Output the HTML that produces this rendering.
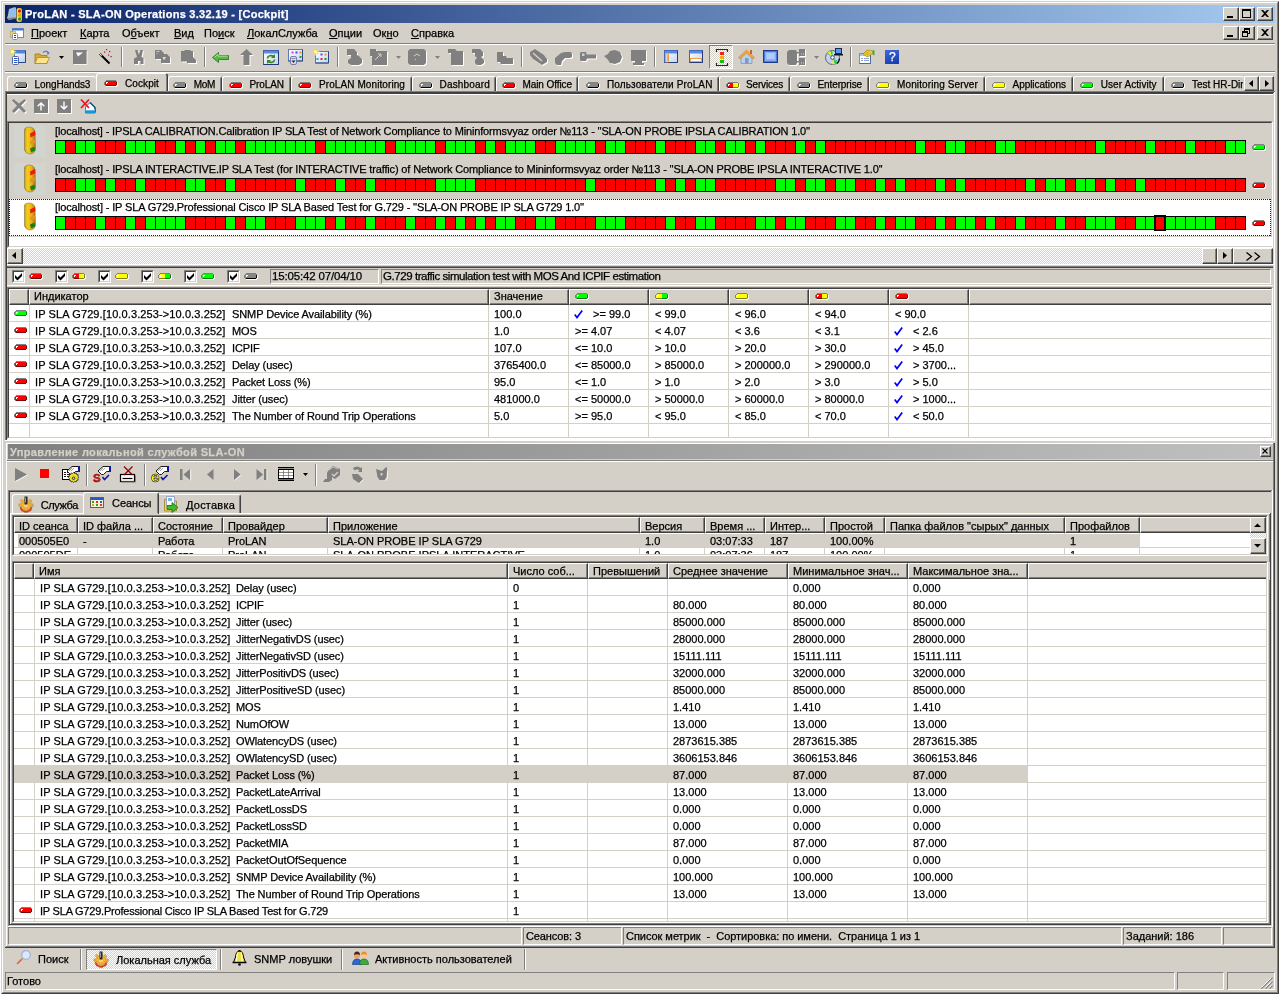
<!DOCTYPE html><html><head><meta charset="utf-8"><title>ProLAN</title><style>
html,body{margin:0;padding:0}
body{width:1280px;height:995px;background:#d4d0c8;position:relative;overflow:hidden;font-family:"Liberation Sans",sans-serif;font-size:11px;color:#000}
div{position:absolute;box-sizing:border-box}
.t,.m,.tb,.ms{-webkit-text-stroke:0.25px currentColor}
svg{position:absolute;overflow:visible}
.t{white-space:pre;line-height:13px;height:13px;font-size:11px;letter-spacing:0}
.tb{white-space:pre;line-height:13px;height:13px;font-size:10px}
.ms{white-space:pre;line-height:13px;height:13px;font-size:11px;letter-spacing:-0.2px}
.m{white-space:pre;line-height:13px;height:13px;font-size:11px}
.b{font-weight:bold}
.raised{border:1px solid;border-color:#fff #404040 #404040 #fff;box-shadow:inset -1px -1px 0 #808080;background:#d4d0c8}
.sunk{border:1px solid;border-color:#808080 #fff #fff #808080}
.hdr{border:1px solid;border-color:#fff #808080 #808080 #fff;background:#d4d0c8;box-shadow:1px 1px 0 #404040}
</style></head><body><div id="root" style="left:0;top:0;width:1280px;height:995px;will-change:transform">
<div style="left:0px;top:0px;width:1280px;height:995px;background:#fff"></div>
<div style="left:1px;top:1px;width:1278px;height:993px;background:#d4d0c8;border:1px solid;border-color:#d4d0c8 #404040 #404040 #d4d0c8"></div>
<div style="left:2px;top:2px;width:1276px;height:991px;border:1px solid;border-color:#fff #808080 #808080 #fff"></div>
<div style="left:5px;top:5px;width:1270px;height:18px;background:linear-gradient(90deg,#0a246a 0%,#a6caf0 100%)"></div>
<svg style="left:7px;top:6px" width="16" height="16" viewBox="0 0 16 16">
<path d="M2 3 L8 1 L9 2 L9 12 L2 14 L0 12 L1 9 Z" fill="#b8bcc0"/>
<path d="M3 3.5 L8 2 L8 10 L3 11 Z" fill="#8cc0f0"/>
<path d="M0.5 12 L2 14 L9 12.5 L8 11 L2 12 Z" fill="#808488"/>
<rect x="9.5" y="2" width="5.5" height="14" rx="2" fill="#e8c020"/>
<rect x="10" y="3" width="2" height="12" fill="#f4dc50"/>
<circle cx="12.5" cy="5" r="1.6" fill="#f01010"/>
<circle cx="12.3" cy="9" r="1.5" fill="#e8a010"/>
<circle cx="12.5" cy="13" r="1.5" fill="#209020"/>
</svg>
<div class="m" style="left:25px;top:8px;color:#fff;font-weight:bold;letter-spacing:0.27px">ProLAN - SLA-ON Operations 3.32.19 - [Cockpit]</div>
<div class="raised" style="left:1223px;top:7px;width:16px;height:14px;"></div>
<div style="left:1227px;top:16px;width:6px;height:2px;background:#000"></div>
<div class="raised" style="left:1239px;top:7px;width:16px;height:14px;"></div>
<div style="left:1242px;top:9px;width:9px;height:9px;border:1px solid #000;border-top:2px solid #000"></div>
<div class="raised" style="left:1257px;top:7px;width:16px;height:14px;"></div>
<svg style="left:1261px;top:10px" width="8" height="7" viewBox="0 0 8 7"><path d="M0 0h2l2 2l2-2h2l-3 3.5l3 3.5h-2l-2-2l-2 2h-2l3-3.5z" fill="#000"/></svg>
<div class="raised" style="left:1223px;top:26px;width:16px;height:14px;"></div>
<div style="left:1227px;top:35px;width:6px;height:2px;background:#000"></div>
<div class="raised" style="left:1239px;top:26px;width:16px;height:14px;"></div>
<div style="left:1244px;top:28px;width:6px;height:6px;border:1px solid #000;border-top:2px solid #000"></div>
<div style="left:1242px;top:31px;width:6px;height:6px;border:1px solid #000;border-top:2px solid #000;background:#d4d0c8"></div>
<div class="raised" style="left:1257px;top:26px;width:16px;height:14px;"></div>
<svg style="left:1261px;top:29px" width="8" height="7" viewBox="0 0 8 7"><path d="M0 0h2l2 2l2-2h2l-3 3.5l3 3.5h-2l-2-2l-2 2h-2l3-3.5z" fill="#000"/></svg>
<svg style="left:10px;top:28px" width="14" height="12" viewBox="0 0 14 12">
<rect x="2.5" y="0.5" width="11" height="9" fill="#fff" stroke="#7088b0"/>
<rect x="2.5" y="0.5" width="11" height="2" fill="#3a78d8"/>
<rect x="0.5" y="3.5" width="5" height="6" fill="#f0d070" stroke="#c0a040" stroke-width="0.6"/>
<rect x="2.5" y="5.5" width="5" height="6" rx="1" fill="#fff" stroke="#8090b0"/>
<rect x="4" y="7" width="2" height="1" fill="#1040e0"/><rect x="4" y="9" width="2" height="1" fill="#1040e0"/>
</svg>
<div class="t" style="left:31px;top:27px;letter-spacing:0"><u>П</u>роект</div>
<div class="t" style="left:80px;top:27px;letter-spacing:0"><u>К</u>арта</div>
<div class="t" style="left:122px;top:27px;letter-spacing:0">О<u>б</u>ъект</div>
<div class="t" style="left:174px;top:27px;letter-spacing:0"><u>В</u>ид</div>
<div class="t" style="left:204px;top:27px;letter-spacing:0">По<u>и</u>ск</div>
<div class="t" style="left:247px;top:27px;letter-spacing:0"><u>Л</u>окалСлужба</div>
<div class="t" style="left:329px;top:27px;letter-spacing:0"><u>О</u>пции</div>
<div class="t" style="left:373px;top:27px;letter-spacing:0">Ок<u>н</u>о</div>
<div class="t" style="left:411px;top:27px;letter-spacing:0"><u>С</u>правка</div>
<div style="left:5px;top:43px;width:1270px;height:1px;background:#808080"></div>
<div style="left:5px;top:44px;width:1270px;height:1px;background:#ffffff"></div>
<svg style="left:9px;top:48px" width="17" height="17" viewBox="0 0 17 17"><rect x="5.500" y="2.500" width="11" height="12" fill="url(#wb0)" stroke="#5878c0"/><defs><linearGradient id="wb0" x1="0" y1="0" x2="1" y2="1"><stop offset="0" stop-color="#ffffff"/><stop offset="1" stop-color="#b8ccf4"/></linearGradient></defs>
<rect x="6" y="3" width="10" height="2.500" fill="#4c84e4"/><path d="M5.500 14.500h11v-12" stroke="#304880" fill="none"/>
<rect x="3.500" y="8.500" width="6" height="8" rx="1" fill="#fff" stroke="#5068a0"/>
<rect x="5" y="10" width="3.500" height="1" fill="#2858d0"/><rect x="5" y="12" width="3.500" height="1" fill="#2858d0"/><rect x="5" y="14" width="3.500" height="1" fill="#2858d0"/>
<path d="M3.500 0v7.500M0 3.700h7.200M1 1.200l5 5M6 1.200l-5 5" stroke="#f8d838" stroke-width="1.200"/><circle cx="3.500" cy="3.700" r="1.500" fill="#fffcc0"/></svg>
<svg style="left:34px;top:49px" width="17" height="16" viewBox="0 0 17 16"><path d="M1 5h5l1 1.500h6v8h-12z" fill="#d8a838" stroke="#a07818" stroke-width="0.800"/>
<path d="M3.500 8.500h12l-3 6h-11.500z" fill="#fce48c" stroke="#b08820" stroke-width="0.800"/>
<path d="M9 3.500q3.500-3 5.500 0.500" fill="none" stroke="#5080c8" stroke-width="1.400"/><path d="M13 2.500l3 1.500l-2.500 2z" fill="#5080c8"/></svg>
<svg style="left:59px;top:56px" width="5" height="3" viewBox="0 0 5 3"><path d="M0 0h5l-2.500 3z" fill="#000"/></svg>
<svg style="left:73px;top:49px" width="15" height="15" viewBox="0 0 15 15"><rect x="0" y="1" width="14" height="14" fill="#808080"/><path d="M3 3.500h7l-5 4z" fill="#fff"/><path d="M14 2v13.500h-13" stroke="#fff" fill="none" stroke-width="0.800"/></svg>
<svg style="left:98px;top:48px" width="14" height="16" viewBox="0 0 14 16"><path d="M1.500 5.500l10 10" stroke="#000" stroke-width="2"/><path d="M1.200 5.200l2.500 2.500" stroke="#f0e8a0" stroke-width="1.200"/>
<rect x="8" y="1" width="1.200" height="1.200" fill="#c01030"/><rect x="11" y="3" width="1.200" height="1.200" fill="#901040"/><rect x="6" y="3.500" width="1.200" height="1.200" fill="#c01030"/><rect x="10" y="6.500" width="1.200" height="1.200" fill="#c01030"/><rect x="12.500" y="8" width="1.200" height="1.200" fill="#901040"/></svg>
<div style="left:121px;top:47px;width:1px;height:20px;background:#808080"></div>
<div style="left:122px;top:47px;width:1px;height:20px;background:#ffffff"></div>
<svg style="left:133px;top:49px" width="13" height="17" viewBox="0 0 13 17"><path d="M2 1h2.500l1.500 4.500l1.500-4.500h2.500l-1.500 7l2 1v6h-3v-3h-2.500v3h-4v-5.500l3-1.500z" fill="#fff" transform="translate(1,1)"/><path d="M2 1h2.500l1.500 4.500l1.500-4.500h2.500l-1.500 7l2 1v6h-3v-3h-2.500v3h-4v-5.500l3-1.500z" fill="#808080"/></svg>
<svg style="left:155px;top:50px" width="16" height="14" viewBox="0 0 16 14"><path d="M0 0h6l3 3v1h3l3 3v6h-9v-4h-6z" fill="#fff" transform="translate(1,1)"/><path d="M0 0h6l3 3v1h3l3 3v6h-9v-4h-6z" fill="#808080"/><path d="M1.500 1.500h3M1.500 3.500h1M8 7.500h2.500l-1.500 2z" stroke="#e8e8e8" fill="#e8e8e8" stroke-width="0.700"/></svg>
<svg style="left:180px;top:50px" width="17" height="14" viewBox="0 0 17 14"><path d="M1 1h3l1-1h5l1 1h2v6l3 3v3h-9v-1.500h-6z" fill="#fff" transform="translate(1,1)"/><path d="M1 1h3l1-1h5l1 1h2v6l3 3v3h-9v-1.500h-6z" fill="#808080"/></svg>
<div style="left:204px;top:47px;width:1px;height:20px;background:#808080"></div>
<div style="left:205px;top:47px;width:1px;height:20px;background:#ffffff"></div>
<svg style="left:212px;top:52px" width="17" height="11" viewBox="0 0 17 11"><path d="M0.500 5.500l6-5v3h10v4h-10v3z" fill="#58b848" stroke="#2c7c24" stroke-width="0.900"/><path d="M2.500 5.300l3.500-3v1.800h9.500" stroke="#b8e8a0" fill="none" stroke-width="0.900"/></svg>
<svg style="left:240px;top:49px" width="15" height="17" viewBox="0 0 15 17"><path d="M6.500 0l6.500 6h-3.500v10h-6v-10h-3.500z" fill="#fff" transform="translate(1,1)"/><path d="M6.500 0l6.500 6h-3.500v10h-6v-10h-3.500z" fill="#808080"/></svg>
<svg style="left:263px;top:50px" width="16" height="15" viewBox="0 0 16 15"><defs><linearGradient id="wb" x1="0" y1="0" x2="1" y2="1"><stop offset="0" stop-color="#ffffff"/><stop offset="1" stop-color="#c4d4f4"/></linearGradient></defs>
<rect x="0.500" y="0.500" width="15" height="14" fill="url(#wb)" stroke="#4060b0"/><rect x="1" y="1" width="14" height="2.500" fill="#5a8ae8"/><path d="M0.500 14.500h15v-13" stroke="#203878" fill="none"/>
<path d="M4.500 8.500a3.500 3 0 0 1 6-2" fill="none" stroke="#3a8a1a" stroke-width="1.700"/><path d="M12 4v4h-4z" fill="#3a8a1a"/>
<path d="M11.500 9.500a3.500 3 0 0 1-6 2" fill="none" stroke="#3a8a1a" stroke-width="1.700"/><path d="M4 14v-4h4z" fill="#3a8a1a"/></svg>
<svg style="left:288px;top:49px" width="16" height="16" viewBox="0 0 16 16"><rect x="0.500" y="0.500" width="14" height="11.500" fill="url(#wb)" stroke="#6078b0"/><path d="M0.500 12h14v-11.500" stroke="#304880" fill="none"/>
<rect x="3.500" y="2.500" width="2" height="2" fill="#d040d0"/><rect x="7.500" y="2.500" width="2" height="2" fill="#5040e0"/><rect x="11.500" y="2.500" width="2" height="2" fill="#f09020"/><rect x="11.500" y="7" width="2" height="2" fill="#20a020"/>
<rect x="2.500" y="7.500" width="6" height="8" rx="1.500" fill="#d8dce8" stroke="#7080a8"/><path d="M3.500 9.500h4" stroke="#8890a8"/><path d="M3.500 11.500h4l-2 2.500z" fill="#202838"/></svg>
<svg style="left:312px;top:48px" width="17" height="16" viewBox="0 0 17 16"><rect x="3.500" y="3.500" width="13" height="11.500" fill="url(#wb)" stroke="#6078b0"/><path d="M3.500 15h13v-11.500" stroke="#304880" fill="none"/>
<rect x="8.500" y="5.500" width="2" height="2" fill="#6040e0"/><rect x="12.500" y="5.500" width="2" height="2" fill="#f09020"/>
<rect x="4.500" y="10" width="2" height="2" fill="#20a0e0"/><rect x="8.500" y="10" width="2" height="2" fill="#f02020"/><rect x="12.500" y="10" width="2" height="2" fill="#20a020"/>
<path d="M3.500 0v7.500M0 3.700h7.200M1 1.200l5 5M6 1.200l-5 5" stroke="#f8d838" stroke-width="1.200"/><circle cx="3.500" cy="3.700" r="1.500" fill="#fffcc0"/></svg>
<div style="left:337px;top:47px;width:1px;height:20px;background:#808080"></div>
<div style="left:338px;top:47px;width:1px;height:20px;background:#ffffff"></div>
<svg style="left:346px;top:49px" width="18" height="17" viewBox="0 0 18 17"><path d="M1 0h7l3 3v3l2 1l3 3v4l-3 2h-8l-3-2v-3l3-2v-3h-4z" fill="#fff" transform="translate(1,1)"/><path d="M1 0h7l3 3v3l2 1l3 3v4l-3 2h-8l-3-2v-3l3-2v-3h-4z" fill="#808080"/></svg>
<svg style="left:370px;top:49px" width="18" height="17" viewBox="0 0 18 17"><path d="M0 0h6v2h11v14h-15v-9h-2z" fill="#fff" transform="translate(1,1)"/><path d="M0 0h6v2h11v14h-15v-9h-2z" fill="#808080"/></svg>
<svg style="left:374px;top:52px" width="10" height="10" viewBox="0 0 10 10"><path d="M1 8l6-6M7 2v3M4 2h3" stroke="#d4d0c8" fill="none"/></svg>
<svg style="left:396px;top:56px" width="5" height="3" viewBox="0 0 5 3"><path d="M0 0h5l-2.500 3z" fill="#808080"/></svg>
<svg style="left:408px;top:49px" width="19" height="17" viewBox="0 0 19 17"><path d="M2 0h14l2 2v12l-2 2h-14l-2-2v-12z" fill="#fff" transform="translate(1,1)"/><path d="M2 0h14l2 2v12l-2 2h-14l-2-2v-12z" fill="#808080"/></svg>
<svg style="left:413px;top:53px" width="8" height="8" viewBox="0 0 8 8"><path d="M1 3l3-2l3 2" stroke="#d4d0c8" fill="none"/><rect x="2" y="6" width="1" height="1" fill="#d4d0c8"/></svg>
<svg style="left:435px;top:56px" width="5" height="3" viewBox="0 0 5 3"><path d="M0 0h5l-2.500 3z" fill="#808080"/></svg>
<svg style="left:448px;top:49px" width="16" height="17" viewBox="0 0 16 17"><path d="M0 0h7l2 2h6v14h-12v-12h-3z" fill="#fff" transform="translate(1,1)"/><path d="M0 0h7l2 2h6v14h-12v-12h-3z" fill="#808080"/></svg>
<svg style="left:472px;top:49px" width="14" height="17" viewBox="0 0 14 17"><path d="M0 0h8l3 3v4l-2 1l3 3v3l-3 2h-4l-2-2v-3l2-2l-2-2v-3h-3z" fill="#fff" transform="translate(1,1)"/><path d="M0 0h8l3 3v4l-2 1l3 3v3l-3 2h-4l-2-2v-3l2-2l-2-2v-3h-3z" fill="#808080"/></svg>
<svg style="left:496px;top:50px" width="18" height="15" viewBox="0 0 18 15"><path d="M1 2h6v4h3l1 2h6v6h-12l-1-2h-3z" fill="#fff" transform="translate(1,1)"/><path d="M1 2h6v4h3l1 2h6v6h-12l-1-2h-3z" fill="#808080"/></svg>
<div style="left:521px;top:47px;width:1px;height:20px;background:#808080"></div>
<div style="left:522px;top:47px;width:1px;height:20px;background:#ffffff"></div>
<svg style="left:528px;top:49px" width="21" height="17" viewBox="0 0 21 17"><path d="M2 3l5-3l9 6l3 4v3l-5 3l-9-6l-3-4z" fill="#fff" transform="translate(1,1)"/><path d="M2 3l5-3l9 6l3 4v3l-5 3l-9-6l-3-4z" fill="#808080"/></svg>
<svg style="left:531px;top:51px" width="14" height="12" viewBox="0 0 14 12"><path d="M2 2l9 8" stroke="#d4d0c8" stroke-width="1.500"/></svg>
<svg style="left:554px;top:50px" width="20" height="16" viewBox="0 0 20 16"><path d="M1 8l6-5l4-1h6l1 2v3l-2 1h-5l-3 3l-1 4h-4l-2-2z" fill="#fff" transform="translate(1,1)"/><path d="M1 8l6-5l4-1h6l1 2v3l-2 1h-5l-3 3l-1 4h-4l-2-2z" fill="#808080"/></svg>
<svg style="left:580px;top:52px" width="18" height="10" viewBox="0 0 18 10"><path d="M1 0h5l1 2.500h9v4h-9l-1 2.500h-5l-1-1v-7z" fill="#fff" transform="translate(1,1)"/><path d="M1 0h5l1 2.500h9v4h-9l-1 2.500h-5l-1-1v-7z" fill="#808080"/><rect x="2" y="1.500" width="2.500" height="2.500" fill="#d4d0c8"/></svg>
<svg style="left:604px;top:50px" width="19" height="16" viewBox="0 0 19 16"><path d="M0 6l4-2l2-3l5-1l5 2l2 5l-2 5l-5 2l-5-1l-2-3z" fill="#fff" transform="translate(1,1)"/><path d="M0 6l4-2l2-3l5-1l5 2l2 5l-2 5l-5 2l-5-1l-2-3z" fill="#808080"/></svg>
<svg style="left:629px;top:50px" width="19" height="16" viewBox="0 0 19 16"><path d="M2 0h15v11h-4v2h2v2h-11v-2h2v-2h-4v-11z" fill="#fff" transform="translate(1,1)"/><path d="M2 0h15v11h-4v2h2v2h-11v-2h2v-2h-4v-11z" fill="#808080"/></svg>
<div style="left:654px;top:47px;width:1px;height:20px;background:#808080"></div>
<div style="left:655px;top:47px;width:1px;height:20px;background:#ffffff"></div>
<svg style="left:664px;top:50px" width="14" height="13" viewBox="0 0 14 13"><rect x="0.500" y="0.500" width="13" height="12" fill="url(#wb)" stroke="#4868b8"/><rect x="1" y="1" width="12" height="2.500" fill="#5a8ae8"/><path d="M0.500 12.500h13v-12" stroke="#283c78" fill="none"/>
<rect x="1.500" y="4" width="3" height="8" fill="#fff" stroke="#f09830" stroke-width="0.900"/><path d="M2.500 6h1.500M2.500 8h1.500M2.500 10h1.500" stroke="#3060d0" stroke-width="0.900"/></svg>
<svg style="left:689px;top:50px" width="14" height="13" viewBox="0 0 14 13"><rect x="0.500" y="0.500" width="13" height="12" fill="url(#wb)" stroke="#4868b8"/><rect x="1" y="1" width="12" height="2.500" fill="#5a8ae8"/><path d="M0.500 12.500h13v-12" stroke="#283c78" fill="none"/>
<rect x="1.500" y="8.500" width="11" height="3" fill="#fff" stroke="#f09830" stroke-width="0.900"/></svg>
<div style="left:709px;top:45px;width:24px;height:24px;border:1px solid;border-color:#808080 #fff #fff #808080;background-color:#d4d0c8;background-image:linear-gradient(45deg,#fff 25%,transparent 25%,transparent 75%,#fff 75%),linear-gradient(45deg,#fff 25%,transparent 25%,transparent 75%,#fff 75%);background-size:2px 2px;background-position:0 0,1px 1px;"></div>
<svg style="left:716px;top:49px" width="12" height="17" viewBox="0 0 12 17"><path d="M0.500 3v-2.500h11v2.500M0.500 14v2.500h11v-2.500" stroke="#282828" stroke-width="1.200" fill="none"/>
<rect x="4" y="3" width="4" height="3" fill="#f02020"/><rect x="4" y="7" width="4" height="3" fill="#f0b010"/><rect x="4" y="11" width="4" height="3" fill="#10c010"/></svg>
<svg style="left:738px;top:49px" width="17" height="16" viewBox="0 0 17 16"><path d="M3 8l5.500-5l5.500 5v6.500h-11z" fill="#b4d0f4" stroke="#7898c8" stroke-width="0.800"/><path d="M8.500 1l8 7.500l-1.500 1.500l-6.500-6l-6.500 6l-1.500-1.500z" fill="#f4a838" stroke="#c07820" stroke-width="0.500"/>
<rect x="7" y="9" width="3.500" height="5.500" fill="#8898b0"/><rect x="12" y="1" width="2" height="4" fill="#d06030"/></svg>
<svg style="left:763px;top:50px" width="15" height="13" viewBox="0 0 15 13"><rect x="0.500" y="0.500" width="14" height="12" fill="#4878d8" stroke="#203c90"/><rect x="2" y="2" width="11" height="9" fill="#88b0f4"/>
<path d="M3.500 4h8M3.500 6h8M3.500 8h8" stroke="#e8f0ff" stroke-width="0.900"/></svg>
<svg style="left:787px;top:49px" width="20" height="17" viewBox="0 0 20 17"><path d="M2 1h7l1 2v11l-1 2h-7l-2-2v-11zM12 0h6v7h-6zM12 9h6v7h-6zM10 3h2v1.500h-2zM10 12h2v1.500h-2z" fill="#fff" transform="translate(1,1)"/><path d="M2 1h7l1 2v11l-1 2h-7l-2-2v-11zM12 0h6v7h-6zM12 9h6v7h-6zM10 3h2v1.500h-2zM10 12h2v1.500h-2z" fill="#808080"/><path d="M14 5h3M14 14h3" stroke="#d4d0c8" stroke-dasharray="1 1"/></svg>
<svg style="left:814px;top:56px" width="5" height="3" viewBox="0 0 5 3"><path d="M0 0h5l-2.500 3z" fill="#808080"/></svg>
<svg style="left:825px;top:48px" width="18" height="18" viewBox="0 0 18 18"><circle cx="7.500" cy="9.500" r="7" fill="#ccd0ec" stroke="#505868" stroke-width="0.900"/>
<path d="M7.500 9.500l-5-5a7 7 0 0 1 2.800-1.600z" fill="#f0f020"/><path d="M7.500 9.500l-2.200-6.600a7 7 0 0 1 2-.400z" fill="#30d030"/><path d="M7.500 9.500l-5.800-3.800a7 7 0 0 1 0.800-1.200z" fill="#20d0e0"/>
<path d="M7.500 9.500l5 5a7 7 0 0 1-2.800 1.600z" fill="#30d030"/><path d="M7.500 9.500l2.200 6.600a7 7 0 0 1-2 .400z" fill="#f0f020"/><path d="M7.500 9.500l5.800 3.800a7 7 0 0 1-0.800 1.200z" fill="#20d0e0"/>
<circle cx="7.500" cy="9.500" r="1.800" fill="#fff" stroke="#303840" stroke-width="0.900"/><path d="M12 15.500a7 7 0 0 0 2.500-5" stroke="#000" stroke-width="1.200" fill="none"/>
<rect x="10.500" y="0.500" width="6" height="5" fill="#5898f0" stroke="#182858"/><rect x="9" y="6" width="9" height="1.500" fill="#101820"/></svg>
<div style="left:850px;top:47px;width:1px;height:20px;background:#808080"></div>
<div style="left:851px;top:47px;width:1px;height:20px;background:#ffffff"></div>
<svg style="left:859px;top:49px" width="17" height="15" viewBox="0 0 17 15"><rect x="0.500" y="4.500" width="11" height="10" fill="#fff" stroke="#7890c0"/><rect x="1" y="5" width="10" height="2" fill="#a8c4f0"/>
<path d="M2 9.500h2M5 9.500h5M2 11.500h2M5 11.500h5" stroke="#88a8d8" stroke-width="1.100"/><path d="M0.500 14.500h11v-10" stroke="#506898" fill="none"/>
<path d="M4 5l4-4l5 0.500l1.500 2l-4 3.500l-2.500 1z" fill="#e8c838" stroke="#a08018" stroke-width="0.600"/><path d="M5 4.500l3-3M6.500 5.500l3-3M8 6.500l2.500-2.500" stroke="#b09020" stroke-width="0.600"/><path d="M13.500 1l2 0.500v5l-2-1z" fill="#40a840"/></svg>
<div style="left:885px;top:50px;width:14px;height:14px;background:linear-gradient(160deg,#3a6ae0,#1838a8)"></div>
<div class="m" style="left:889px;top:50px;color:#fff;font-size:12px;line-height:14px;letter-spacing:0">?</div>
<div style="left:5px;top:71px;width:1270px;height:1px;background:#808080"></div>
<div style="left:5px;top:72px;width:1270px;height:1px;background:#ffffff"></div>
<div style="left:5px;top:91px;width:1270px;height:1px;background:#808080"></div>
<div style="left:5px;top:92px;width:1269px;height:1px;background:#404040"></div>
<div style="left:6px;top:93px;width:1268px;height:1px;background:#404040"></div>
<div style="left:7px;top:76px;width:89px;height:15px;border-left:1px solid #fff;border-top:1px solid #fff;border-radius:3px 3px 0 0;"></div>
<svg style="left:14px;top:82px" width="14" height="7" viewBox="0 0 14 7"><g shape-rendering="crispEdges"><rect x="2" y="6" width="11" height="1" fill="#fff"/><rect x="13" y="2" width="1" height="4" fill="#fff"/><rect x="2" y="0" width="10" height="1" fill="#808080"/><rect x="0" y="2" width="1" height="3" fill="#808080"/><rect x="1" y="1" width="1" height="1" fill="#808080"/><rect x="1" y="5" width="1" height="1" fill="#808080"/><rect x="12" y="1" width="1" height="1" fill="#808080"/><rect x="1" y="2" width="6" height="3" fill="#868686"/><rect x="7" y="2" width="6" height="3" fill="#868686"/><rect x="2" y="1" width="5" height="1" fill="#868686"/><rect x="7" y="1" width="5" height="1" fill="#868686"/><rect x="2" y="5" width="5" height="1" fill="#000000"/><rect x="7" y="5" width="5" height="1" fill="#000000"/><rect x="12" y="2" width="1" height="3" fill="#000000"/><rect x="2" y="2" width="2" height="1" fill="#fff"/><rect x="2" y="3" width="1" height="1" fill="#fff"/></g></svg>
<div class="tb" style="left:34.6px;top:78px;letter-spacing:-0.102px;font-size:10px;">LongHands3</div>
<div style="left:96px;top:73px;width:72px;height:18px;background:#d4d0c8;border-left:1px solid #fff;border-top:1px solid #fff;border-right:2px solid #404040;border-radius:3px 3px 0 0"></div>
<div style="left:166px;top:75px;width:1px;height:16px;background:#808080"></div>
<svg style="left:104px;top:80px" width="14" height="7" viewBox="0 0 14 7"><g shape-rendering="crispEdges"><rect x="2" y="6" width="11" height="1" fill="#fff"/><rect x="13" y="2" width="1" height="4" fill="#fff"/><rect x="2" y="0" width="10" height="1" fill="#808080"/><rect x="0" y="2" width="1" height="3" fill="#808080"/><rect x="1" y="1" width="1" height="1" fill="#808080"/><rect x="1" y="5" width="1" height="1" fill="#808080"/><rect x="12" y="1" width="1" height="1" fill="#808080"/><rect x="1" y="2" width="6" height="3" fill="#ff0000"/><rect x="7" y="2" width="6" height="3" fill="#ff0000"/><rect x="2" y="1" width="5" height="1" fill="#ff0000"/><rect x="7" y="1" width="5" height="1" fill="#ff0000"/><rect x="2" y="5" width="5" height="1" fill="#800000"/><rect x="7" y="5" width="5" height="1" fill="#800000"/><rect x="12" y="2" width="1" height="3" fill="#800000"/><rect x="2" y="2" width="2" height="1" fill="#fff"/><rect x="2" y="3" width="1" height="1" fill="#fff"/></g></svg>
<div class="tb" style="left:125px;top:77px;letter-spacing:0.093px;font-size:10px;">Cockpit</div>
<div style="left:168px;top:76px;width:54px;height:15px;border-left:1px solid #fff;border-top:1px solid #fff;border-radius:3px 3px 0 0;border-right:1px solid #404040;"></div>
<div style="left:220px;top:78px;width:1px;height:13px;background:#808080"></div>
<svg style="left:173px;top:82px" width="14" height="7" viewBox="0 0 14 7"><g shape-rendering="crispEdges"><rect x="2" y="6" width="11" height="1" fill="#fff"/><rect x="13" y="2" width="1" height="4" fill="#fff"/><rect x="2" y="0" width="10" height="1" fill="#808080"/><rect x="0" y="2" width="1" height="3" fill="#808080"/><rect x="1" y="1" width="1" height="1" fill="#808080"/><rect x="1" y="5" width="1" height="1" fill="#808080"/><rect x="12" y="1" width="1" height="1" fill="#808080"/><rect x="1" y="2" width="6" height="3" fill="#868686"/><rect x="7" y="2" width="6" height="3" fill="#868686"/><rect x="2" y="1" width="5" height="1" fill="#868686"/><rect x="7" y="1" width="5" height="1" fill="#868686"/><rect x="2" y="5" width="5" height="1" fill="#000000"/><rect x="7" y="5" width="5" height="1" fill="#000000"/><rect x="12" y="2" width="1" height="3" fill="#000000"/><rect x="2" y="2" width="2" height="1" fill="#fff"/><rect x="2" y="3" width="1" height="1" fill="#fff"/></g></svg>
<div class="tb" style="left:193.7px;top:78px;letter-spacing:-0.241px;font-size:10px;">MoM</div>
<div style="left:222px;top:76px;width:69px;height:15px;border-left:1px solid #fff;border-top:1px solid #fff;border-radius:3px 3px 0 0;border-right:1px solid #404040;"></div>
<div style="left:289px;top:78px;width:1px;height:13px;background:#808080"></div>
<svg style="left:229px;top:82px" width="14" height="7" viewBox="0 0 14 7"><g shape-rendering="crispEdges"><rect x="2" y="6" width="11" height="1" fill="#fff"/><rect x="13" y="2" width="1" height="4" fill="#fff"/><rect x="2" y="0" width="10" height="1" fill="#808080"/><rect x="0" y="2" width="1" height="3" fill="#808080"/><rect x="1" y="1" width="1" height="1" fill="#808080"/><rect x="1" y="5" width="1" height="1" fill="#808080"/><rect x="12" y="1" width="1" height="1" fill="#808080"/><rect x="1" y="2" width="6" height="3" fill="#ff0000"/><rect x="7" y="2" width="6" height="3" fill="#ff0000"/><rect x="2" y="1" width="5" height="1" fill="#ff0000"/><rect x="7" y="1" width="5" height="1" fill="#ff0000"/><rect x="2" y="5" width="5" height="1" fill="#800000"/><rect x="7" y="5" width="5" height="1" fill="#800000"/><rect x="12" y="2" width="1" height="3" fill="#800000"/><rect x="2" y="2" width="2" height="1" fill="#fff"/><rect x="2" y="3" width="1" height="1" fill="#fff"/></g></svg>
<div class="tb" style="left:249.5px;top:78px;letter-spacing:-0.086px;font-size:10px;">ProLAN</div>
<div style="left:291px;top:76px;width:121px;height:15px;border-left:1px solid #fff;border-top:1px solid #fff;border-radius:3px 3px 0 0;border-right:1px solid #404040;"></div>
<div style="left:410px;top:78px;width:1px;height:13px;background:#808080"></div>
<svg style="left:298px;top:82px" width="14" height="7" viewBox="0 0 14 7"><g shape-rendering="crispEdges"><rect x="2" y="6" width="11" height="1" fill="#fff"/><rect x="13" y="2" width="1" height="4" fill="#fff"/><rect x="2" y="0" width="10" height="1" fill="#808080"/><rect x="0" y="2" width="1" height="3" fill="#808080"/><rect x="1" y="1" width="1" height="1" fill="#808080"/><rect x="1" y="5" width="1" height="1" fill="#808080"/><rect x="12" y="1" width="1" height="1" fill="#808080"/><rect x="1" y="2" width="6" height="3" fill="#ff0000"/><rect x="7" y="2" width="6" height="3" fill="#ff0000"/><rect x="2" y="1" width="5" height="1" fill="#ff0000"/><rect x="7" y="1" width="5" height="1" fill="#ff0000"/><rect x="2" y="5" width="5" height="1" fill="#800000"/><rect x="7" y="5" width="5" height="1" fill="#800000"/><rect x="12" y="2" width="1" height="3" fill="#800000"/><rect x="2" y="2" width="2" height="1" fill="#fff"/><rect x="2" y="3" width="1" height="1" fill="#fff"/></g></svg>
<div class="tb" style="left:319px;top:78px;letter-spacing:0.089px;font-size:10px;">ProLAN Monitoring</div>
<div style="left:412px;top:76px;width:84px;height:15px;border-left:1px solid #fff;border-top:1px solid #fff;border-radius:3px 3px 0 0;border-right:1px solid #404040;"></div>
<div style="left:494px;top:78px;width:1px;height:13px;background:#808080"></div>
<svg style="left:419px;top:82px" width="14" height="7" viewBox="0 0 14 7"><g shape-rendering="crispEdges"><rect x="2" y="6" width="11" height="1" fill="#fff"/><rect x="13" y="2" width="1" height="4" fill="#fff"/><rect x="2" y="0" width="10" height="1" fill="#808080"/><rect x="0" y="2" width="1" height="3" fill="#808080"/><rect x="1" y="1" width="1" height="1" fill="#808080"/><rect x="1" y="5" width="1" height="1" fill="#808080"/><rect x="12" y="1" width="1" height="1" fill="#808080"/><rect x="1" y="2" width="6" height="3" fill="#868686"/><rect x="7" y="2" width="6" height="3" fill="#868686"/><rect x="2" y="1" width="5" height="1" fill="#868686"/><rect x="7" y="1" width="5" height="1" fill="#868686"/><rect x="2" y="5" width="5" height="1" fill="#000000"/><rect x="7" y="5" width="5" height="1" fill="#000000"/><rect x="12" y="2" width="1" height="3" fill="#000000"/><rect x="2" y="2" width="2" height="1" fill="#fff"/><rect x="2" y="3" width="1" height="1" fill="#fff"/></g></svg>
<div class="tb" style="left:439.5px;top:78px;letter-spacing:0.175px;font-size:10px;">Dashboard</div>
<div style="left:496px;top:76px;width:82px;height:15px;border-left:1px solid #fff;border-top:1px solid #fff;border-radius:3px 3px 0 0;border-right:1px solid #404040;"></div>
<div style="left:576px;top:78px;width:1px;height:13px;background:#808080"></div>
<svg style="left:502px;top:82px" width="14" height="7" viewBox="0 0 14 7"><g shape-rendering="crispEdges"><rect x="2" y="6" width="11" height="1" fill="#fff"/><rect x="13" y="2" width="1" height="4" fill="#fff"/><rect x="2" y="0" width="10" height="1" fill="#808080"/><rect x="0" y="2" width="1" height="3" fill="#808080"/><rect x="1" y="1" width="1" height="1" fill="#808080"/><rect x="1" y="5" width="1" height="1" fill="#808080"/><rect x="12" y="1" width="1" height="1" fill="#808080"/><rect x="1" y="2" width="6" height="3" fill="#ff0000"/><rect x="7" y="2" width="6" height="3" fill="#ff0000"/><rect x="2" y="1" width="5" height="1" fill="#ff0000"/><rect x="7" y="1" width="5" height="1" fill="#ff0000"/><rect x="2" y="5" width="5" height="1" fill="#800000"/><rect x="7" y="5" width="5" height="1" fill="#800000"/><rect x="12" y="2" width="1" height="3" fill="#800000"/><rect x="2" y="2" width="2" height="1" fill="#fff"/><rect x="2" y="3" width="1" height="1" fill="#fff"/></g></svg>
<div class="tb" style="left:522.5px;top:78px;letter-spacing:-0.082px;font-size:10px;">Main Office</div>
<div style="left:578px;top:76px;width:141px;height:15px;border-left:1px solid #fff;border-top:1px solid #fff;border-radius:3px 3px 0 0;border-right:1px solid #404040;"></div>
<div style="left:717px;top:78px;width:1px;height:13px;background:#808080"></div>
<svg style="left:586px;top:82px" width="14" height="7" viewBox="0 0 14 7"><g shape-rendering="crispEdges"><rect x="2" y="6" width="11" height="1" fill="#fff"/><rect x="13" y="2" width="1" height="4" fill="#fff"/><rect x="2" y="0" width="10" height="1" fill="#808080"/><rect x="0" y="2" width="1" height="3" fill="#808080"/><rect x="1" y="1" width="1" height="1" fill="#808080"/><rect x="1" y="5" width="1" height="1" fill="#808080"/><rect x="12" y="1" width="1" height="1" fill="#808080"/><rect x="1" y="2" width="6" height="3" fill="#868686"/><rect x="7" y="2" width="6" height="3" fill="#868686"/><rect x="2" y="1" width="5" height="1" fill="#868686"/><rect x="7" y="1" width="5" height="1" fill="#868686"/><rect x="2" y="5" width="5" height="1" fill="#000000"/><rect x="7" y="5" width="5" height="1" fill="#000000"/><rect x="12" y="2" width="1" height="3" fill="#000000"/><rect x="2" y="2" width="2" height="1" fill="#fff"/><rect x="2" y="3" width="1" height="1" fill="#fff"/></g></svg>
<div class="tb" style="left:607px;top:78px;letter-spacing:0.127px;font-size:10px;">Пользователи ProLAN</div>
<div style="left:719px;top:76px;width:71px;height:15px;border-left:1px solid #fff;border-top:1px solid #fff;border-radius:3px 3px 0 0;border-right:1px solid #404040;"></div>
<div style="left:788px;top:78px;width:1px;height:13px;background:#808080"></div>
<svg style="left:726px;top:82px" width="14" height="7" viewBox="0 0 14 7"><g shape-rendering="crispEdges"><rect x="2" y="6" width="11" height="1" fill="#fff"/><rect x="13" y="2" width="1" height="4" fill="#fff"/><rect x="2" y="0" width="10" height="1" fill="#808080"/><rect x="0" y="2" width="1" height="3" fill="#808080"/><rect x="1" y="1" width="1" height="1" fill="#808080"/><rect x="1" y="5" width="1" height="1" fill="#808080"/><rect x="12" y="1" width="1" height="1" fill="#808080"/><rect x="1" y="2" width="6" height="3" fill="#ff0000"/><rect x="7" y="2" width="6" height="3" fill="#ffff00"/><rect x="2" y="1" width="5" height="1" fill="#ff0000"/><rect x="7" y="1" width="5" height="1" fill="#ffff00"/><rect x="2" y="5" width="5" height="1" fill="#800000"/><rect x="7" y="5" width="5" height="1" fill="#808000"/><rect x="12" y="2" width="1" height="3" fill="#808000"/><rect x="2" y="2" width="2" height="1" fill="#fff"/><rect x="2" y="3" width="1" height="1" fill="#fff"/></g></svg>
<div class="tb" style="left:746px;top:78px;letter-spacing:-0.168px;font-size:10px;">Services</div>
<div style="left:790px;top:76px;width:79px;height:15px;border-left:1px solid #fff;border-top:1px solid #fff;border-radius:3px 3px 0 0;border-right:1px solid #404040;"></div>
<div style="left:867px;top:78px;width:1px;height:13px;background:#808080"></div>
<svg style="left:797px;top:82px" width="14" height="7" viewBox="0 0 14 7"><g shape-rendering="crispEdges"><rect x="2" y="6" width="11" height="1" fill="#fff"/><rect x="13" y="2" width="1" height="4" fill="#fff"/><rect x="2" y="0" width="10" height="1" fill="#808080"/><rect x="0" y="2" width="1" height="3" fill="#808080"/><rect x="1" y="1" width="1" height="1" fill="#808080"/><rect x="1" y="5" width="1" height="1" fill="#808080"/><rect x="12" y="1" width="1" height="1" fill="#808080"/><rect x="1" y="2" width="6" height="3" fill="#868686"/><rect x="7" y="2" width="6" height="3" fill="#868686"/><rect x="2" y="1" width="5" height="1" fill="#868686"/><rect x="7" y="1" width="5" height="1" fill="#868686"/><rect x="2" y="5" width="5" height="1" fill="#000000"/><rect x="7" y="5" width="5" height="1" fill="#000000"/><rect x="12" y="2" width="1" height="3" fill="#000000"/><rect x="2" y="2" width="2" height="1" fill="#fff"/><rect x="2" y="3" width="1" height="1" fill="#fff"/></g></svg>
<div class="tb" style="left:817.5px;top:78px;letter-spacing:-0.108px;font-size:10px;">Enterprise</div>
<div style="left:869px;top:76px;width:116px;height:15px;border-left:1px solid #fff;border-top:1px solid #fff;border-radius:3px 3px 0 0;border-right:1px solid #404040;"></div>
<div style="left:983px;top:78px;width:1px;height:13px;background:#808080"></div>
<svg style="left:876px;top:82px" width="14" height="7" viewBox="0 0 14 7"><g shape-rendering="crispEdges"><rect x="2" y="6" width="11" height="1" fill="#fff"/><rect x="13" y="2" width="1" height="4" fill="#fff"/><rect x="2" y="0" width="10" height="1" fill="#808080"/><rect x="0" y="2" width="1" height="3" fill="#808080"/><rect x="1" y="1" width="1" height="1" fill="#808080"/><rect x="1" y="5" width="1" height="1" fill="#808080"/><rect x="12" y="1" width="1" height="1" fill="#808080"/><rect x="1" y="2" width="6" height="3" fill="#ffff00"/><rect x="7" y="2" width="6" height="3" fill="#ffff00"/><rect x="2" y="1" width="5" height="1" fill="#ffff00"/><rect x="7" y="1" width="5" height="1" fill="#ffff00"/><rect x="2" y="5" width="5" height="1" fill="#808000"/><rect x="7" y="5" width="5" height="1" fill="#808000"/><rect x="12" y="2" width="1" height="3" fill="#808000"/><rect x="2" y="2" width="2" height="1" fill="#fff"/><rect x="2" y="3" width="1" height="1" fill="#fff"/></g></svg>
<div class="tb" style="left:897px;top:78px;letter-spacing:0.122px;font-size:10px;">Monitoring Server</div>
<div style="left:985px;top:76px;width:88px;height:15px;border-left:1px solid #fff;border-top:1px solid #fff;border-radius:3px 3px 0 0;border-right:1px solid #404040;"></div>
<div style="left:1071px;top:78px;width:1px;height:13px;background:#808080"></div>
<svg style="left:992px;top:82px" width="14" height="7" viewBox="0 0 14 7"><g shape-rendering="crispEdges"><rect x="2" y="6" width="11" height="1" fill="#fff"/><rect x="13" y="2" width="1" height="4" fill="#fff"/><rect x="2" y="0" width="10" height="1" fill="#808080"/><rect x="0" y="2" width="1" height="3" fill="#808080"/><rect x="1" y="1" width="1" height="1" fill="#808080"/><rect x="1" y="5" width="1" height="1" fill="#808080"/><rect x="12" y="1" width="1" height="1" fill="#808080"/><rect x="1" y="2" width="6" height="3" fill="#ffff00"/><rect x="7" y="2" width="6" height="3" fill="#ffff00"/><rect x="2" y="1" width="5" height="1" fill="#ffff00"/><rect x="7" y="1" width="5" height="1" fill="#ffff00"/><rect x="2" y="5" width="5" height="1" fill="#808000"/><rect x="7" y="5" width="5" height="1" fill="#808000"/><rect x="12" y="2" width="1" height="3" fill="#808000"/><rect x="2" y="2" width="2" height="1" fill="#fff"/><rect x="2" y="3" width="1" height="1" fill="#fff"/></g></svg>
<div class="tb" style="left:1012.5px;top:78px;letter-spacing:-0.036px;font-size:10px;">Applications</div>
<div style="left:1073px;top:76px;width:91px;height:15px;border-left:1px solid #fff;border-top:1px solid #fff;border-radius:3px 3px 0 0;border-right:1px solid #404040;"></div>
<div style="left:1162px;top:78px;width:1px;height:13px;background:#808080"></div>
<svg style="left:1080px;top:82px" width="14" height="7" viewBox="0 0 14 7"><g shape-rendering="crispEdges"><rect x="2" y="6" width="11" height="1" fill="#fff"/><rect x="13" y="2" width="1" height="4" fill="#fff"/><rect x="2" y="0" width="10" height="1" fill="#808080"/><rect x="0" y="2" width="1" height="3" fill="#808080"/><rect x="1" y="1" width="1" height="1" fill="#808080"/><rect x="1" y="5" width="1" height="1" fill="#808080"/><rect x="12" y="1" width="1" height="1" fill="#808080"/><rect x="1" y="2" width="6" height="3" fill="#00ff00"/><rect x="7" y="2" width="6" height="3" fill="#00ff00"/><rect x="2" y="1" width="5" height="1" fill="#00ff00"/><rect x="7" y="1" width="5" height="1" fill="#00ff00"/><rect x="2" y="5" width="5" height="1" fill="#008000"/><rect x="7" y="5" width="5" height="1" fill="#008000"/><rect x="12" y="2" width="1" height="3" fill="#008000"/><rect x="2" y="2" width="2" height="1" fill="#fff"/><rect x="2" y="3" width="1" height="1" fill="#fff"/></g></svg>
<div class="tb" style="left:1100.7px;top:78px;letter-spacing:0.076px;font-size:10px;">User Activity</div>
<div style="left:1164px;top:76px;width:80px;height:15px;border-left:1px solid #fff;border-top:1px solid #fff;border-radius:3px 3px 0 0;"></div>
<svg style="left:1171px;top:82px" width="14" height="7" viewBox="0 0 14 7"><g shape-rendering="crispEdges"><rect x="2" y="6" width="11" height="1" fill="#fff"/><rect x="13" y="2" width="1" height="4" fill="#fff"/><rect x="2" y="0" width="10" height="1" fill="#808080"/><rect x="0" y="2" width="1" height="3" fill="#808080"/><rect x="1" y="1" width="1" height="1" fill="#808080"/><rect x="1" y="5" width="1" height="1" fill="#808080"/><rect x="12" y="1" width="1" height="1" fill="#808080"/><rect x="1" y="2" width="6" height="3" fill="#868686"/><rect x="7" y="2" width="6" height="3" fill="#868686"/><rect x="2" y="1" width="5" height="1" fill="#868686"/><rect x="7" y="1" width="5" height="1" fill="#868686"/><rect x="2" y="5" width="5" height="1" fill="#000000"/><rect x="7" y="5" width="5" height="1" fill="#000000"/><rect x="12" y="2" width="1" height="3" fill="#000000"/><rect x="2" y="2" width="2" height="1" fill="#fff"/><rect x="2" y="3" width="1" height="1" fill="#fff"/></g></svg>
<div style="left:1192px;top:78px;width:51px;height:13px;overflow:hidden"><div class="tb" style="left:0;top:0">Test HR-Diror</div></div>
<div class="raised" style="left:1244px;top:76px;width:15px;height:15px;"></div>
<div class="raised" style="left:1259px;top:76px;width:15px;height:15px;"></div>
<svg style="left:1249px;top:80px" width="4" height="7" viewBox="0 0 4 7"><path d="M4 0v7l-4-3.500z" fill="#000"/></svg>
<svg style="left:1265px;top:80px" width="4" height="7" viewBox="0 0 4 7"><path d="M0 0v7l4-3.500z" fill="#000"/></svg>
<div style="left:5px;top:91px;width:1px;height:350px;background:#808080"></div>
<div style="left:6px;top:92px;width:1px;height:348px;background:#404040"></div>
<div style="left:1274px;top:92px;width:1px;height:349px;background:#ffffff"></div>
<div style="left:1273px;top:93px;width:1px;height:347px;background:#d4d0c8"></div>
<div style="left:7px;top:94px;width:1266px;height:1px;background:#ffffff"></div>
<svg style="left:12px;top:99px" width="15" height="15" viewBox="0 0 15 15"><path d="M1.500 0l5.500 4.500l5.500-4.500l1.500 1.500l-5 5.200l5 5.300l-2 2l-5-5l-5 5l-2-2l5-5.300l-5-5.200z" fill="#fff" transform="translate(1,1)"/><path d="M1.500 0l5.500 4.500l5.500-4.500l1.500 1.500l-5 5.200l5 5.300l-2 2l-5-5l-5 5l-2-2l5-5.300l-5-5.200z" fill="#808080"/></svg>
<div style="left:34px;top:99px;width:14px;height:14px;background:#808080;box-shadow:1px 1px 0 #fff"></div>
<svg style="left:37px;top:102px" width="8" height="9" viewBox="0 0 8 9"><path d="M4 1v7.500M0.700 4.300l3.300-3.300l3.300 3.300" stroke="#fff" stroke-width="1.400" fill="none"/></svg>
<div style="left:57px;top:99px;width:14px;height:14px;background:#808080;box-shadow:1px 1px 0 #fff"></div>
<svg style="left:60px;top:101px" width="8" height="9" viewBox="0 0 8 9"><path d="M4 0.500v7.500M0.700 4.700l3.300 3.300l3.300-3.300" stroke="#fff" stroke-width="1.400" fill="none"/></svg>
<svg style="left:80px;top:99px" width="16" height="15" viewBox="0 0 16 15"><path d="M5.500 8l4.500-4.500l5 5v5.500h-9.500z" fill="#fff" stroke="#2868a8" stroke-width="0.900"/><path d="M10 3.500l5 5v5" stroke="#104880" stroke-width="1.300" fill="none"/><path d="M5.500 11h9.500v3h-9.500z" fill="#1898d8"/><path d="M5.500 11h9.500" stroke="#fff" stroke-width="0.600"/>
<path d="M1 0.500l8 8.500M9 0.500l-8 8.500" stroke="#f01020" stroke-width="1.700"/></svg>
<div style="left:7px;top:121px;width:1266px;height:127px;background:#d4d0c8;border:1px solid;border-color:#808080 #fff #fff #808080"></div>
<div style="left:8px;top:122px;width:1264px;height:125px;border:1px solid;border-color:#404040 #d4d0c8 #d4d0c8 #404040"></div>
<div style="left:9px;top:237px;width:1263px;height:9px;background:#fff"></div>
<div style="left:14px;top:125px;width:32px;height:32px;background:#d2d5cf"></div>
<svg style="left:24px;top:127px" width="12" height="27" viewBox="0 0 12 27"><defs><linearGradient id="tl" x1="0" x2="1"><stop offset="0" stop-color="#c08808"/><stop offset="0.250" stop-color="#f4cc1c"/><stop offset="0.600" stop-color="#ecb810"/><stop offset="1" stop-color="#a87810"/></linearGradient></defs><path d="M0.500 3q0-3 4.500-3q5 0 6 4.500l0.500 18q-1 4.500-6 4.500q-4-0.500-5-4z" fill="url(#tl)" stroke="#806830" stroke-width="0.500"/>
<path d="M6 6.500l5-2.500l0.500 4l-5 2.500z" fill="#f01808"/><path d="M6 14l5-1.500v3.500l-4.500 1.500z" fill="#e09030"/><path d="M6 21.500l4.500-2l0.500 4l-4 2z" fill="#108018"/>
<path d="M2 4v19M3.500 8l1 1M2.500 14l1 1M3 20l1 1" stroke="#e0e020" stroke-width="0.800" opacity="0.700"/></svg>
<div class="m" style="left:55px;top:125px;letter-spacing:-0.16px;font-size:11px;">[localhost] - IPSLA CALIBRATION.Calibration IP SLA Test of Network Compliance to Mininformsvyaz order №113 - ''SLA-ON PROBE IPSLA CALIBRATION 1.0''</div>
<div style="left:55px;top:140px;width:1191px;height:14px;background:#000"></div>
<div style="left:55px;top:141px;width:1190px;height:12px;background:linear-gradient(90deg,#00ff00 0px,#00ff00 10px,#ff0000 10px,#ff0000 20px,#00ff00 20px,#00ff00 40px,#ff0000 40px,#ff0000 70px,#00ff00 70px,#00ff00 100px,#ff0000 100px,#ff0000 120px,#00ff00 120px,#00ff00 130px,#ff0000 130px,#ff0000 140px,#00ff00 140px,#00ff00 150px,#ff0000 150px,#ff0000 160px,#00ff00 160px,#00ff00 180px,#ff0000 180px,#ff0000 190px,#00ff00 190px,#00ff00 260px,#ff0000 260px,#ff0000 270px,#00ff00 270px,#00ff00 330px,#ff0000 330px,#ff0000 340px,#00ff00 340px,#00ff00 380px,#ff0000 380px,#ff0000 390px,#00ff00 390px,#00ff00 420px,#ff0000 420px,#ff0000 430px,#00ff00 430px,#00ff00 440px,#ff0000 440px,#ff0000 450px,#00ff00 450px,#00ff00 480px,#ff0000 480px,#ff0000 500px,#00ff00 500px,#00ff00 540px,#ff0000 540px,#ff0000 550px,#00ff00 550px,#00ff00 570px,#ff0000 570px,#ff0000 600px,#00ff00 600px,#00ff00 610px,#ff0000 610px,#ff0000 640px,#00ff00 640px,#00ff00 660px,#ff0000 660px,#ff0000 670px,#00ff00 670px,#00ff00 690px,#ff0000 690px,#ff0000 700px,#00ff00 700px,#00ff00 710px,#ff0000 710px,#ff0000 740px,#00ff00 740px,#00ff00 750px,#ff0000 750px,#ff0000 760px,#00ff00 760px,#00ff00 770px,#ff0000 770px,#ff0000 860px,#00ff00 860px,#00ff00 870px,#ff0000 870px,#ff0000 890px,#00ff00 890px,#00ff00 910px,#ff0000 910px,#ff0000 940px,#00ff00 940px,#00ff00 960px,#ff0000 960px,#ff0000 1040px,#00ff00 1040px,#00ff00 1050px,#ff0000 1050px,#ff0000 1090px,#00ff00 1090px,#00ff00 1100px,#ff0000 1100px,#ff0000 1130px,#00ff00 1130px,#00ff00 1140px,#ff0000 1140px,#ff0000 1170px,#00ff00 1170px,#00ff00 1190px)"></div>
<div style="left:55px;top:141px;width:1191px;height:12px;background:repeating-linear-gradient(90deg,#000 0,#000 1px,transparent 1px,transparent 10px)"></div>
<svg style="left:1252px;top:144px" width="14" height="7" viewBox="0 0 14 7"><g shape-rendering="crispEdges"><rect x="2" y="6" width="11" height="1" fill="#fff"/><rect x="13" y="2" width="1" height="4" fill="#fff"/><rect x="2" y="0" width="10" height="1" fill="#808080"/><rect x="0" y="2" width="1" height="3" fill="#808080"/><rect x="1" y="1" width="1" height="1" fill="#808080"/><rect x="1" y="5" width="1" height="1" fill="#808080"/><rect x="12" y="1" width="1" height="1" fill="#808080"/><rect x="1" y="2" width="6" height="3" fill="#00ff00"/><rect x="7" y="2" width="6" height="3" fill="#00ff00"/><rect x="2" y="1" width="5" height="1" fill="#00ff00"/><rect x="7" y="1" width="5" height="1" fill="#00ff00"/><rect x="2" y="5" width="5" height="1" fill="#008000"/><rect x="7" y="5" width="5" height="1" fill="#008000"/><rect x="12" y="2" width="1" height="3" fill="#008000"/><rect x="2" y="2" width="2" height="1" fill="#fff"/><rect x="2" y="3" width="1" height="1" fill="#fff"/></g></svg>
<div style="left:14px;top:163px;width:32px;height:32px;background:#d2d5cf"></div>
<svg style="left:24px;top:165px" width="12" height="27" viewBox="0 0 12 27"><path d="M0.500 3q0-3 4.500-3q5 0 6 4.500l0.500 18q-1 4.500-6 4.500q-4-0.500-5-4z" fill="url(#tl)" stroke="#806830" stroke-width="0.500"/>
<path d="M6 6.500l5-2.500l0.500 4l-5 2.500z" fill="#f01808"/><path d="M6 14l5-1.500v3.500l-4.500 1.500z" fill="#e09030"/><path d="M6 21.500l4.500-2l0.500 4l-4 2z" fill="#108018"/>
<path d="M2 4v19M3.500 8l1 1M2.500 14l1 1M3 20l1 1" stroke="#e0e020" stroke-width="0.800" opacity="0.700"/></svg>
<div class="m" style="left:55px;top:163px;letter-spacing:-0.152px;font-size:11px;">[localhost] - IPSLA INTERACTIVE.IP SLA Test (for INTERACTIVE traffic) of Network Compliance to Mininformsvyaz order №113 - ''SLA-ON PROBE IPSLA INTERACTIVE 1.0''</div>
<div style="left:55px;top:178px;width:1191px;height:14px;background:#000"></div>
<div style="left:55px;top:179px;width:1190px;height:12px;background:linear-gradient(90deg,#ff0000 0px,#ff0000 20px,#00ff00 20px,#00ff00 40px,#ff0000 40px,#ff0000 50px,#00ff00 50px,#00ff00 60px,#ff0000 60px,#ff0000 80px,#00ff00 80px,#00ff00 90px,#ff0000 90px,#ff0000 130px,#00ff00 130px,#00ff00 150px,#ff0000 150px,#ff0000 170px,#00ff00 170px,#00ff00 180px,#ff0000 180px,#ff0000 240px,#00ff00 240px,#00ff00 250px,#ff0000 250px,#ff0000 280px,#00ff00 280px,#00ff00 290px,#ff0000 290px,#ff0000 310px,#00ff00 310px,#00ff00 320px,#ff0000 320px,#ff0000 380px,#00ff00 380px,#00ff00 420px,#ff0000 420px,#ff0000 530px,#00ff00 530px,#00ff00 540px,#ff0000 540px,#ff0000 600px,#00ff00 600px,#00ff00 610px,#ff0000 610px,#ff0000 620px,#00ff00 620px,#00ff00 630px,#ff0000 630px,#ff0000 640px,#00ff00 640px,#00ff00 660px,#ff0000 660px,#ff0000 720px,#00ff00 720px,#00ff00 740px,#ff0000 740px,#ff0000 750px,#00ff00 750px,#00ff00 770px,#ff0000 770px,#ff0000 780px,#00ff00 780px,#00ff00 800px,#ff0000 800px,#ff0000 820px,#00ff00 820px,#00ff00 830px,#ff0000 830px,#ff0000 840px,#00ff00 840px,#00ff00 850px,#ff0000 850px,#ff0000 880px,#00ff00 880px,#00ff00 890px,#ff0000 890px,#ff0000 900px,#00ff00 900px,#00ff00 910px,#ff0000 910px,#ff0000 970px,#00ff00 970px,#00ff00 980px,#ff0000 980px,#ff0000 990px,#00ff00 990px,#00ff00 1010px,#ff0000 1010px,#ff0000 1020px,#00ff00 1020px,#00ff00 1040px,#ff0000 1040px,#ff0000 1050px,#00ff00 1050px,#00ff00 1060px,#ff0000 1060px,#ff0000 1080px,#00ff00 1080px,#00ff00 1090px,#ff0000 1090px,#ff0000 1190px)"></div>
<div style="left:55px;top:179px;width:1191px;height:12px;background:repeating-linear-gradient(90deg,#000 0,#000 1px,transparent 1px,transparent 10px)"></div>
<svg style="left:1252px;top:182px" width="14" height="7" viewBox="0 0 14 7"><g shape-rendering="crispEdges"><rect x="2" y="6" width="11" height="1" fill="#fff"/><rect x="13" y="2" width="1" height="4" fill="#fff"/><rect x="2" y="0" width="10" height="1" fill="#808080"/><rect x="0" y="2" width="1" height="3" fill="#808080"/><rect x="1" y="1" width="1" height="1" fill="#808080"/><rect x="1" y="5" width="1" height="1" fill="#808080"/><rect x="12" y="1" width="1" height="1" fill="#808080"/><rect x="1" y="2" width="6" height="3" fill="#ff0000"/><rect x="7" y="2" width="6" height="3" fill="#ff0000"/><rect x="2" y="1" width="5" height="1" fill="#ff0000"/><rect x="7" y="1" width="5" height="1" fill="#ff0000"/><rect x="2" y="5" width="5" height="1" fill="#800000"/><rect x="7" y="5" width="5" height="1" fill="#800000"/><rect x="12" y="2" width="1" height="3" fill="#800000"/><rect x="2" y="2" width="2" height="1" fill="#fff"/><rect x="2" y="3" width="1" height="1" fill="#fff"/></g></svg>
<div style="left:9px;top:199px;width:1262px;height:37px;background:#fff"></div>
<div style="left:9px;top:199px;width:1262px;height:1px;background:repeating-linear-gradient(90deg,#0a246a 0,#0a246a 1px,#fff 1px,#fff 2px)"></div>
<div style="left:9px;top:235px;width:1262px;height:1px;background:repeating-linear-gradient(90deg,#0a246a 0,#0a246a 1px,#fff 1px,#fff 2px)"></div>
<div style="left:9px;top:199px;width:1px;height:37px;background:repeating-linear-gradient(180deg,#0a246a 0,#0a246a 1px,#fff 1px,#fff 2px)"></div>
<div style="left:1270px;top:199px;width:1px;height:37px;background:repeating-linear-gradient(180deg,#0a246a 0,#0a246a 1px,#fff 1px,#fff 2px)"></div>
<div style="left:14px;top:201px;width:32px;height:32px;background:#fff"></div>
<svg style="left:24px;top:203px" width="12" height="27" viewBox="0 0 12 27"><path d="M0.500 3q0-3 4.500-3q5 0 6 4.500l0.500 18q-1 4.500-6 4.500q-4-0.500-5-4z" fill="url(#tl)" stroke="#806830" stroke-width="0.500"/>
<path d="M6 6.500l5-2.500l0.500 4l-5 2.500z" fill="#f01808"/><path d="M6 14l5-1.500v3.500l-4.500 1.500z" fill="#e09030"/><path d="M6 21.500l4.500-2l0.500 4l-4 2z" fill="#108018"/>
<path d="M2 4v19M3.500 8l1 1M2.500 14l1 1M3 20l1 1" stroke="#e0e020" stroke-width="0.800" opacity="0.700"/></svg>
<div class="m" style="left:55px;top:201px;letter-spacing:-0.15px;font-size:11px;">[localhost] - IP SLA G729.Professional Cisco IP SLA Based Test for G.729 - ''SLA-ON PROBE IP SLA G729 1.0''</div>
<div style="left:55px;top:216px;width:1191px;height:14px;background:#000"></div>
<div style="left:55px;top:217px;width:1190px;height:12px;background:linear-gradient(90deg,#00ff00 0px,#00ff00 10px,#ff0000 10px,#ff0000 40px,#00ff00 40px,#00ff00 50px,#ff0000 50px,#ff0000 70px,#00ff00 70px,#00ff00 80px,#ff0000 80px,#ff0000 90px,#00ff00 90px,#00ff00 130px,#ff0000 130px,#ff0000 170px,#00ff00 170px,#00ff00 180px,#ff0000 180px,#ff0000 190px,#00ff00 190px,#00ff00 210px,#ff0000 210px,#ff0000 240px,#00ff00 240px,#00ff00 270px,#ff0000 270px,#ff0000 280px,#00ff00 280px,#00ff00 290px,#ff0000 290px,#ff0000 310px,#00ff00 310px,#00ff00 320px,#ff0000 320px,#ff0000 350px,#00ff00 350px,#00ff00 360px,#ff0000 360px,#ff0000 380px,#00ff00 380px,#00ff00 390px,#ff0000 390px,#ff0000 400px,#00ff00 400px,#00ff00 410px,#ff0000 410px,#ff0000 420px,#00ff00 420px,#00ff00 430px,#ff0000 430px,#ff0000 440px,#00ff00 440px,#00ff00 460px,#ff0000 460px,#ff0000 480px,#00ff00 480px,#00ff00 500px,#ff0000 500px,#ff0000 540px,#00ff00 540px,#00ff00 570px,#ff0000 570px,#ff0000 610px,#00ff00 610px,#00ff00 620px,#ff0000 620px,#ff0000 640px,#00ff00 640px,#00ff00 660px,#ff0000 660px,#ff0000 700px,#00ff00 700px,#00ff00 720px,#ff0000 720px,#ff0000 730px,#00ff00 730px,#00ff00 750px,#ff0000 750px,#ff0000 780px,#00ff00 780px,#00ff00 800px,#ff0000 800px,#ff0000 820px,#00ff00 820px,#00ff00 830px,#ff0000 830px,#ff0000 840px,#00ff00 840px,#00ff00 860px,#ff0000 860px,#ff0000 880px,#00ff00 880px,#00ff00 890px,#ff0000 890px,#ff0000 900px,#00ff00 900px,#00ff00 920px,#ff0000 920px,#ff0000 930px,#00ff00 930px,#00ff00 940px,#ff0000 940px,#ff0000 960px,#00ff00 960px,#00ff00 970px,#ff0000 970px,#ff0000 1000px,#00ff00 1000px,#00ff00 1010px,#ff0000 1010px,#ff0000 1030px,#00ff00 1030px,#00ff00 1060px,#ff0000 1060px,#ff0000 1080px,#00ff00 1080px,#00ff00 1100px,#ff0000 1100px,#ff0000 1110px,#00ff00 1110px,#00ff00 1160px,#ff0000 1160px,#ff0000 1190px)"></div>
<div style="left:55px;top:217px;width:1191px;height:12px;background:repeating-linear-gradient(90deg,#000 0,#000 1px,transparent 1px,transparent 10px)"></div>
<div style="left:1154px;top:215px;width:12px;height:16px;border:2px solid #000;background:#ff0000"></div>
<svg style="left:1252px;top:220px" width="14" height="7" viewBox="0 0 14 7"><g shape-rendering="crispEdges"><rect x="2" y="6" width="11" height="1" fill="#fff"/><rect x="13" y="2" width="1" height="4" fill="#fff"/><rect x="2" y="0" width="10" height="1" fill="#808080"/><rect x="0" y="2" width="1" height="3" fill="#808080"/><rect x="1" y="1" width="1" height="1" fill="#808080"/><rect x="1" y="5" width="1" height="1" fill="#808080"/><rect x="12" y="1" width="1" height="1" fill="#808080"/><rect x="1" y="2" width="6" height="3" fill="#ff0000"/><rect x="7" y="2" width="6" height="3" fill="#ff0000"/><rect x="2" y="1" width="5" height="1" fill="#ff0000"/><rect x="7" y="1" width="5" height="1" fill="#ff0000"/><rect x="2" y="5" width="5" height="1" fill="#800000"/><rect x="7" y="5" width="5" height="1" fill="#800000"/><rect x="12" y="2" width="1" height="3" fill="#800000"/><rect x="2" y="2" width="2" height="1" fill="#fff"/><rect x="2" y="3" width="1" height="1" fill="#fff"/></g></svg>
<div style="left:7px;top:248px;width:1266px;height:16px;background-color:#d4d0c8;background-image:linear-gradient(45deg,#fff 25%,transparent 25%,transparent 75%,#fff 75%),linear-gradient(45deg,#fff 25%,transparent 25%,transparent 75%,#fff 75%);background-size:2px 2px;background-position:0 0,1px 1px;"></div>
<div class="raised" style="left:7px;top:248px;width:16px;height:16px;"></div>
<svg style="left:12px;top:252px" width="4" height="7" viewBox="0 0 4 7"><path d="M4 0v7l-4-3.500z" fill="#000"/></svg>
<div class="raised" style="left:1202px;top:248px;width:15px;height:16px;"></div>
<div class="raised" style="left:1217px;top:248px;width:16px;height:16px;"></div>
<svg style="left:1223px;top:252px" width="4" height="7" viewBox="0 0 4 7"><path d="M0 0v7l4-3.500z" fill="#000"/></svg>
<div class="raised" style="left:1233px;top:248px;width:40px;height:16px;"></div>
<svg style="left:1246px;top:252px" width="14" height="9" viewBox="0 0 14 9"><path d="M0.500 0.500l5 4l-5 4M8.500 0.500l5 4l-5 4" stroke="#000" stroke-width="1.300" fill="none"/></svg>
<div style="left:7px;top:264px;width:1267px;height:1px;background:#ffffff"></div>
<div style="left:7px;top:266px;width:1266px;height:1px;background:#808080"></div>
<div style="left:7px;top:267px;width:1266px;height:1px;background:#404040"></div>
<div style="left:7px;top:285px;width:1266px;height:1px;background:#ffffff"></div>
<div style="left:12px;top:270px;width:13px;height:13px;background:#fff;border:1px solid;border-color:#808080 #fff #fff #808080"></div>
<div style="left:13px;top:271px;width:11px;height:11px;border:1px solid;border-color:#404040 #d4d0c8 #d4d0c8 #404040"></div>
<svg style="left:15px;top:273px" width="7" height="7" viewBox="0 0 7 7"><path d="M0 2v3l2.500 2.500l4.500-4.500v-3l-4.500 4.500z" fill="#000"/></svg>
<svg style="left:29px;top:273px" width="14" height="7" viewBox="0 0 14 7"><g shape-rendering="crispEdges"><rect x="2" y="6" width="11" height="1" fill="#fff"/><rect x="13" y="2" width="1" height="4" fill="#fff"/><rect x="2" y="0" width="10" height="1" fill="#808080"/><rect x="0" y="2" width="1" height="3" fill="#808080"/><rect x="1" y="1" width="1" height="1" fill="#808080"/><rect x="1" y="5" width="1" height="1" fill="#808080"/><rect x="12" y="1" width="1" height="1" fill="#808080"/><rect x="1" y="2" width="6" height="3" fill="#ff0000"/><rect x="7" y="2" width="6" height="3" fill="#ff0000"/><rect x="2" y="1" width="5" height="1" fill="#ff0000"/><rect x="7" y="1" width="5" height="1" fill="#ff0000"/><rect x="2" y="5" width="5" height="1" fill="#800000"/><rect x="7" y="5" width="5" height="1" fill="#800000"/><rect x="12" y="2" width="1" height="3" fill="#800000"/><rect x="2" y="2" width="2" height="1" fill="#fff"/><rect x="2" y="3" width="1" height="1" fill="#fff"/></g></svg>
<div style="left:55px;top:270px;width:13px;height:13px;background:#fff;border:1px solid;border-color:#808080 #fff #fff #808080"></div>
<div style="left:56px;top:271px;width:11px;height:11px;border:1px solid;border-color:#404040 #d4d0c8 #d4d0c8 #404040"></div>
<svg style="left:58px;top:273px" width="7" height="7" viewBox="0 0 7 7"><path d="M0 2v3l2.500 2.500l4.500-4.500v-3l-4.500 4.500z" fill="#000"/></svg>
<svg style="left:72px;top:273px" width="14" height="7" viewBox="0 0 14 7"><g shape-rendering="crispEdges"><rect x="2" y="6" width="11" height="1" fill="#fff"/><rect x="13" y="2" width="1" height="4" fill="#fff"/><rect x="2" y="0" width="10" height="1" fill="#808080"/><rect x="0" y="2" width="1" height="3" fill="#808080"/><rect x="1" y="1" width="1" height="1" fill="#808080"/><rect x="1" y="5" width="1" height="1" fill="#808080"/><rect x="12" y="1" width="1" height="1" fill="#808080"/><rect x="1" y="2" width="6" height="3" fill="#ff0000"/><rect x="7" y="2" width="6" height="3" fill="#ffff00"/><rect x="2" y="1" width="5" height="1" fill="#ff0000"/><rect x="7" y="1" width="5" height="1" fill="#ffff00"/><rect x="2" y="5" width="5" height="1" fill="#800000"/><rect x="7" y="5" width="5" height="1" fill="#808000"/><rect x="12" y="2" width="1" height="3" fill="#808000"/><rect x="2" y="2" width="2" height="1" fill="#fff"/><rect x="2" y="3" width="1" height="1" fill="#fff"/></g></svg>
<div style="left:98px;top:270px;width:13px;height:13px;background:#fff;border:1px solid;border-color:#808080 #fff #fff #808080"></div>
<div style="left:99px;top:271px;width:11px;height:11px;border:1px solid;border-color:#404040 #d4d0c8 #d4d0c8 #404040"></div>
<svg style="left:101px;top:273px" width="7" height="7" viewBox="0 0 7 7"><path d="M0 2v3l2.500 2.500l4.500-4.500v-3l-4.500 4.500z" fill="#000"/></svg>
<svg style="left:115px;top:273px" width="14" height="7" viewBox="0 0 14 7"><g shape-rendering="crispEdges"><rect x="2" y="6" width="11" height="1" fill="#fff"/><rect x="13" y="2" width="1" height="4" fill="#fff"/><rect x="2" y="0" width="10" height="1" fill="#808080"/><rect x="0" y="2" width="1" height="3" fill="#808080"/><rect x="1" y="1" width="1" height="1" fill="#808080"/><rect x="1" y="5" width="1" height="1" fill="#808080"/><rect x="12" y="1" width="1" height="1" fill="#808080"/><rect x="1" y="2" width="6" height="3" fill="#ffff00"/><rect x="7" y="2" width="6" height="3" fill="#ffff00"/><rect x="2" y="1" width="5" height="1" fill="#ffff00"/><rect x="7" y="1" width="5" height="1" fill="#ffff00"/><rect x="2" y="5" width="5" height="1" fill="#808000"/><rect x="7" y="5" width="5" height="1" fill="#808000"/><rect x="12" y="2" width="1" height="3" fill="#808000"/><rect x="2" y="2" width="2" height="1" fill="#fff"/><rect x="2" y="3" width="1" height="1" fill="#fff"/></g></svg>
<div style="left:141px;top:270px;width:13px;height:13px;background:#fff;border:1px solid;border-color:#808080 #fff #fff #808080"></div>
<div style="left:142px;top:271px;width:11px;height:11px;border:1px solid;border-color:#404040 #d4d0c8 #d4d0c8 #404040"></div>
<svg style="left:144px;top:273px" width="7" height="7" viewBox="0 0 7 7"><path d="M0 2v3l2.500 2.500l4.500-4.500v-3l-4.500 4.500z" fill="#000"/></svg>
<svg style="left:158px;top:273px" width="14" height="7" viewBox="0 0 14 7"><g shape-rendering="crispEdges"><rect x="2" y="6" width="11" height="1" fill="#fff"/><rect x="13" y="2" width="1" height="4" fill="#fff"/><rect x="2" y="0" width="10" height="1" fill="#808080"/><rect x="0" y="2" width="1" height="3" fill="#808080"/><rect x="1" y="1" width="1" height="1" fill="#808080"/><rect x="1" y="5" width="1" height="1" fill="#808080"/><rect x="12" y="1" width="1" height="1" fill="#808080"/><rect x="1" y="2" width="6" height="3" fill="#ffff00"/><rect x="7" y="2" width="6" height="3" fill="#00ff00"/><rect x="2" y="1" width="5" height="1" fill="#ffff00"/><rect x="7" y="1" width="5" height="1" fill="#00ff00"/><rect x="2" y="5" width="5" height="1" fill="#808000"/><rect x="7" y="5" width="5" height="1" fill="#008000"/><rect x="12" y="2" width="1" height="3" fill="#008000"/><rect x="2" y="2" width="2" height="1" fill="#fff"/><rect x="2" y="3" width="1" height="1" fill="#fff"/></g></svg>
<div style="left:184px;top:270px;width:13px;height:13px;background:#fff;border:1px solid;border-color:#808080 #fff #fff #808080"></div>
<div style="left:185px;top:271px;width:11px;height:11px;border:1px solid;border-color:#404040 #d4d0c8 #d4d0c8 #404040"></div>
<svg style="left:187px;top:273px" width="7" height="7" viewBox="0 0 7 7"><path d="M0 2v3l2.500 2.500l4.500-4.500v-3l-4.500 4.500z" fill="#000"/></svg>
<svg style="left:201px;top:273px" width="14" height="7" viewBox="0 0 14 7"><g shape-rendering="crispEdges"><rect x="2" y="6" width="11" height="1" fill="#fff"/><rect x="13" y="2" width="1" height="4" fill="#fff"/><rect x="2" y="0" width="10" height="1" fill="#808080"/><rect x="0" y="2" width="1" height="3" fill="#808080"/><rect x="1" y="1" width="1" height="1" fill="#808080"/><rect x="1" y="5" width="1" height="1" fill="#808080"/><rect x="12" y="1" width="1" height="1" fill="#808080"/><rect x="1" y="2" width="6" height="3" fill="#00ff00"/><rect x="7" y="2" width="6" height="3" fill="#00ff00"/><rect x="2" y="1" width="5" height="1" fill="#00ff00"/><rect x="7" y="1" width="5" height="1" fill="#00ff00"/><rect x="2" y="5" width="5" height="1" fill="#008000"/><rect x="7" y="5" width="5" height="1" fill="#008000"/><rect x="12" y="2" width="1" height="3" fill="#008000"/><rect x="2" y="2" width="2" height="1" fill="#fff"/><rect x="2" y="3" width="1" height="1" fill="#fff"/></g></svg>
<div style="left:227px;top:270px;width:13px;height:13px;background:#fff;border:1px solid;border-color:#808080 #fff #fff #808080"></div>
<div style="left:228px;top:271px;width:11px;height:11px;border:1px solid;border-color:#404040 #d4d0c8 #d4d0c8 #404040"></div>
<svg style="left:230px;top:273px" width="7" height="7" viewBox="0 0 7 7"><path d="M0 2v3l2.500 2.500l4.500-4.500v-3l-4.500 4.500z" fill="#000"/></svg>
<svg style="left:244px;top:273px" width="14" height="7" viewBox="0 0 14 7"><g shape-rendering="crispEdges"><rect x="2" y="6" width="11" height="1" fill="#fff"/><rect x="13" y="2" width="1" height="4" fill="#fff"/><rect x="2" y="0" width="10" height="1" fill="#808080"/><rect x="0" y="2" width="1" height="3" fill="#808080"/><rect x="1" y="1" width="1" height="1" fill="#808080"/><rect x="1" y="5" width="1" height="1" fill="#808080"/><rect x="12" y="1" width="1" height="1" fill="#808080"/><rect x="1" y="2" width="6" height="3" fill="#868686"/><rect x="7" y="2" width="6" height="3" fill="#868686"/><rect x="2" y="1" width="5" height="1" fill="#868686"/><rect x="7" y="1" width="5" height="1" fill="#868686"/><rect x="2" y="5" width="5" height="1" fill="#000000"/><rect x="7" y="5" width="5" height="1" fill="#000000"/><rect x="12" y="2" width="1" height="3" fill="#000000"/><rect x="2" y="2" width="2" height="1" fill="#fff"/><rect x="2" y="3" width="1" height="1" fill="#fff"/></g></svg>
<div style="left:270px;top:269px;width:109px;height:15px;border:1px solid;border-color:#808080 #fff #fff #808080"></div>
<div class="m" style="left:272px;top:270px;letter-spacing:-0.161px;font-size:11.5px;">15:05:42 07/04/10</div>
<div style="left:381px;top:269px;width:890px;height:15px;border:1px solid;border-color:#808080 #fff #fff #808080"></div>
<div class="m" style="left:383px;top:270px;letter-spacing:-0.439px;font-size:11.5px;">G.729 traffic simulation test with MOS And ICPIF estimation</div>
<div style="left:7px;top:287px;width:1266px;height:152px;background:#fff;border:1px solid;border-color:#808080 #fff #fff #808080"></div>
<div style="left:8px;top:288px;width:1264px;height:150px;border:1px solid;border-color:#404040 #d4d0c8 #d4d0c8 #404040"></div>
<div style="left:9px;top:289px;width:1262px;height:16px;background:#d4d0c8"></div>
<div style="left:9px;top:289px;width:20px;height:16px;border:1px solid;border-color:#fff #404040 #404040 #fff;background:#d4d0c8;"></div>
<div style="left:27px;top:290px;width:1px;height:14px;background:#808080"></div>
<div style="left:10px;top:303px;width:18px;height:1px;background:#808080"></div>
<div style="left:29px;top:289px;width:460px;height:16px;border:1px solid;border-color:#fff #404040 #404040 #fff;background:#d4d0c8;"></div>
<div style="left:487px;top:290px;width:1px;height:14px;background:#808080"></div>
<div style="left:30px;top:303px;width:458px;height:1px;background:#808080"></div>
<div class="t" style="left:34px;top:290px;">Индикатор</div>
<div style="left:489px;top:289px;width:80px;height:16px;border:1px solid;border-color:#fff #404040 #404040 #fff;background:#d4d0c8;"></div>
<div style="left:567px;top:290px;width:1px;height:14px;background:#808080"></div>
<div style="left:490px;top:303px;width:78px;height:1px;background:#808080"></div>
<div class="t" style="left:494px;top:290px;">Значение</div>
<div style="left:569px;top:289px;width:80px;height:16px;border:1px solid;border-color:#fff #404040 #404040 #fff;background:#d4d0c8;"></div>
<div style="left:647px;top:290px;width:1px;height:14px;background:#808080"></div>
<div style="left:570px;top:303px;width:78px;height:1px;background:#808080"></div>
<svg style="left:575px;top:293px" width="14" height="7" viewBox="0 0 14 7"><g shape-rendering="crispEdges"><rect x="2" y="6" width="11" height="1" fill="#fff"/><rect x="13" y="2" width="1" height="4" fill="#fff"/><rect x="2" y="0" width="10" height="1" fill="#808080"/><rect x="0" y="2" width="1" height="3" fill="#808080"/><rect x="1" y="1" width="1" height="1" fill="#808080"/><rect x="1" y="5" width="1" height="1" fill="#808080"/><rect x="12" y="1" width="1" height="1" fill="#808080"/><rect x="1" y="2" width="6" height="3" fill="#00ff00"/><rect x="7" y="2" width="6" height="3" fill="#00ff00"/><rect x="2" y="1" width="5" height="1" fill="#00ff00"/><rect x="7" y="1" width="5" height="1" fill="#00ff00"/><rect x="2" y="5" width="5" height="1" fill="#008000"/><rect x="7" y="5" width="5" height="1" fill="#008000"/><rect x="12" y="2" width="1" height="3" fill="#008000"/><rect x="2" y="2" width="2" height="1" fill="#fff"/><rect x="2" y="3" width="1" height="1" fill="#fff"/></g></svg>
<div style="left:649px;top:289px;width:80px;height:16px;border:1px solid;border-color:#fff #404040 #404040 #fff;background:#d4d0c8;"></div>
<div style="left:727px;top:290px;width:1px;height:14px;background:#808080"></div>
<div style="left:650px;top:303px;width:78px;height:1px;background:#808080"></div>
<svg style="left:655px;top:293px" width="14" height="7" viewBox="0 0 14 7"><g shape-rendering="crispEdges"><rect x="2" y="6" width="11" height="1" fill="#fff"/><rect x="13" y="2" width="1" height="4" fill="#fff"/><rect x="2" y="0" width="10" height="1" fill="#808080"/><rect x="0" y="2" width="1" height="3" fill="#808080"/><rect x="1" y="1" width="1" height="1" fill="#808080"/><rect x="1" y="5" width="1" height="1" fill="#808080"/><rect x="12" y="1" width="1" height="1" fill="#808080"/><rect x="1" y="2" width="6" height="3" fill="#ffff00"/><rect x="7" y="2" width="6" height="3" fill="#00ff00"/><rect x="2" y="1" width="5" height="1" fill="#ffff00"/><rect x="7" y="1" width="5" height="1" fill="#00ff00"/><rect x="2" y="5" width="5" height="1" fill="#808000"/><rect x="7" y="5" width="5" height="1" fill="#008000"/><rect x="12" y="2" width="1" height="3" fill="#008000"/><rect x="2" y="2" width="2" height="1" fill="#fff"/><rect x="2" y="3" width="1" height="1" fill="#fff"/></g></svg>
<div style="left:729px;top:289px;width:80px;height:16px;border:1px solid;border-color:#fff #404040 #404040 #fff;background:#d4d0c8;"></div>
<div style="left:807px;top:290px;width:1px;height:14px;background:#808080"></div>
<div style="left:730px;top:303px;width:78px;height:1px;background:#808080"></div>
<svg style="left:735px;top:293px" width="14" height="7" viewBox="0 0 14 7"><g shape-rendering="crispEdges"><rect x="2" y="6" width="11" height="1" fill="#fff"/><rect x="13" y="2" width="1" height="4" fill="#fff"/><rect x="2" y="0" width="10" height="1" fill="#808080"/><rect x="0" y="2" width="1" height="3" fill="#808080"/><rect x="1" y="1" width="1" height="1" fill="#808080"/><rect x="1" y="5" width="1" height="1" fill="#808080"/><rect x="12" y="1" width="1" height="1" fill="#808080"/><rect x="1" y="2" width="6" height="3" fill="#ffff00"/><rect x="7" y="2" width="6" height="3" fill="#ffff00"/><rect x="2" y="1" width="5" height="1" fill="#ffff00"/><rect x="7" y="1" width="5" height="1" fill="#ffff00"/><rect x="2" y="5" width="5" height="1" fill="#808000"/><rect x="7" y="5" width="5" height="1" fill="#808000"/><rect x="12" y="2" width="1" height="3" fill="#808000"/><rect x="2" y="2" width="2" height="1" fill="#fff"/><rect x="2" y="3" width="1" height="1" fill="#fff"/></g></svg>
<div style="left:809px;top:289px;width:80px;height:16px;border:1px solid;border-color:#fff #404040 #404040 #fff;background:#d4d0c8;"></div>
<div style="left:887px;top:290px;width:1px;height:14px;background:#808080"></div>
<div style="left:810px;top:303px;width:78px;height:1px;background:#808080"></div>
<svg style="left:815px;top:293px" width="14" height="7" viewBox="0 0 14 7"><g shape-rendering="crispEdges"><rect x="2" y="6" width="11" height="1" fill="#fff"/><rect x="13" y="2" width="1" height="4" fill="#fff"/><rect x="2" y="0" width="10" height="1" fill="#808080"/><rect x="0" y="2" width="1" height="3" fill="#808080"/><rect x="1" y="1" width="1" height="1" fill="#808080"/><rect x="1" y="5" width="1" height="1" fill="#808080"/><rect x="12" y="1" width="1" height="1" fill="#808080"/><rect x="1" y="2" width="6" height="3" fill="#ff0000"/><rect x="7" y="2" width="6" height="3" fill="#ffff00"/><rect x="2" y="1" width="5" height="1" fill="#ff0000"/><rect x="7" y="1" width="5" height="1" fill="#ffff00"/><rect x="2" y="5" width="5" height="1" fill="#800000"/><rect x="7" y="5" width="5" height="1" fill="#808000"/><rect x="12" y="2" width="1" height="3" fill="#808000"/><rect x="2" y="2" width="2" height="1" fill="#fff"/><rect x="2" y="3" width="1" height="1" fill="#fff"/></g></svg>
<div style="left:889px;top:289px;width:80px;height:16px;border:1px solid;border-color:#fff #404040 #404040 #fff;background:#d4d0c8;"></div>
<div style="left:967px;top:290px;width:1px;height:14px;background:#808080"></div>
<div style="left:890px;top:303px;width:78px;height:1px;background:#808080"></div>
<svg style="left:895px;top:293px" width="14" height="7" viewBox="0 0 14 7"><g shape-rendering="crispEdges"><rect x="2" y="6" width="11" height="1" fill="#fff"/><rect x="13" y="2" width="1" height="4" fill="#fff"/><rect x="2" y="0" width="10" height="1" fill="#808080"/><rect x="0" y="2" width="1" height="3" fill="#808080"/><rect x="1" y="1" width="1" height="1" fill="#808080"/><rect x="1" y="5" width="1" height="1" fill="#808080"/><rect x="12" y="1" width="1" height="1" fill="#808080"/><rect x="1" y="2" width="6" height="3" fill="#ff0000"/><rect x="7" y="2" width="6" height="3" fill="#ff0000"/><rect x="2" y="1" width="5" height="1" fill="#ff0000"/><rect x="7" y="1" width="5" height="1" fill="#ff0000"/><rect x="2" y="5" width="5" height="1" fill="#800000"/><rect x="7" y="5" width="5" height="1" fill="#800000"/><rect x="12" y="2" width="1" height="3" fill="#800000"/><rect x="2" y="2" width="2" height="1" fill="#fff"/><rect x="2" y="3" width="1" height="1" fill="#fff"/></g></svg>
<div style="left:969px;top:289px;width:307px;height:16px;border:1px solid;border-color:#fff #404040 #404040 #fff;background:#d4d0c8;"></div>
<div style="left:1274px;top:290px;width:1px;height:14px;background:#808080"></div>
<div style="left:970px;top:303px;width:305px;height:1px;background:#808080"></div>
<div style="left:1271px;top:289px;width:1px;height:16px;background:#d4d0c8"></div>
<div style="left:1272px;top:288px;width:1px;height:17px;background:#ffffff"></div>
<div style="left:1273px;top:288px;width:1px;height:18px;background:#d4d0c8"></div>
<div style="left:1274px;top:288px;width:1px;height:18px;background:#ffffff"></div>
<div style="left:1275px;top:288px;width:2px;height:18px;background:#d4d0c8"></div>
<div style="left:9px;top:321px;width:1262px;height:1px;background:#d4d0c8"></div>
<div style="left:9px;top:338px;width:1262px;height:1px;background:#d4d0c8"></div>
<div style="left:9px;top:355px;width:1262px;height:1px;background:#d4d0c8"></div>
<div style="left:9px;top:372px;width:1262px;height:1px;background:#d4d0c8"></div>
<div style="left:9px;top:389px;width:1262px;height:1px;background:#d4d0c8"></div>
<div style="left:9px;top:406px;width:1262px;height:1px;background:#d4d0c8"></div>
<div style="left:9px;top:423px;width:1262px;height:1px;background:#d4d0c8"></div>
<div style="left:29px;top:305px;width:1px;height:132px;background:#d4d0c8"></div>
<div style="left:488px;top:305px;width:1px;height:132px;background:#d4d0c8"></div>
<div style="left:568px;top:305px;width:1px;height:132px;background:#d4d0c8"></div>
<div style="left:648px;top:305px;width:1px;height:132px;background:#d4d0c8"></div>
<div style="left:728px;top:305px;width:1px;height:132px;background:#d4d0c8"></div>
<div style="left:808px;top:305px;width:1px;height:132px;background:#d4d0c8"></div>
<div style="left:888px;top:305px;width:1px;height:132px;background:#d4d0c8"></div>
<div style="left:968px;top:305px;width:1px;height:132px;background:#d4d0c8"></div>
<svg style="left:14px;top:310px" width="14" height="7" viewBox="0 0 14 7"><g shape-rendering="crispEdges"><rect x="2" y="6" width="11" height="1" fill="#fff"/><rect x="13" y="2" width="1" height="4" fill="#fff"/><rect x="2" y="0" width="10" height="1" fill="#808080"/><rect x="0" y="2" width="1" height="3" fill="#808080"/><rect x="1" y="1" width="1" height="1" fill="#808080"/><rect x="1" y="5" width="1" height="1" fill="#808080"/><rect x="12" y="1" width="1" height="1" fill="#808080"/><rect x="1" y="2" width="6" height="3" fill="#00ff00"/><rect x="7" y="2" width="6" height="3" fill="#00ff00"/><rect x="2" y="1" width="5" height="1" fill="#00ff00"/><rect x="7" y="1" width="5" height="1" fill="#00ff00"/><rect x="2" y="5" width="5" height="1" fill="#008000"/><rect x="7" y="5" width="5" height="1" fill="#008000"/><rect x="12" y="2" width="1" height="3" fill="#008000"/><rect x="2" y="2" width="2" height="1" fill="#fff"/><rect x="2" y="3" width="1" height="1" fill="#fff"/></g></svg>
<div class="t" style="left:35px;top:308px;letter-spacing:0.107px;font-size:11px;">IP SLA G729.[10.0.3.253-&gt;10.0.3.252]</div>
<div class="t" style="left:232px;top:308px;letter-spacing:-0.1px">SNMP Device Availability (%)</div>
<div class="t" style="left:494px;top:308px;">100.0</div>
<svg style="left:574px;top:310px" width="9" height="9" viewBox="0 0 9 9"><path d="M0.700 4.500l2.300 3l5.200-7" stroke="#0000ff" stroke-width="1.700" fill="none"/></svg>
<div class="t" style="left:593px;top:308px;">&gt;= 99.0</div>
<div class="t" style="left:655px;top:308px;">&lt; 99.0</div>
<div class="t" style="left:735px;top:308px;">&lt; 96.0</div>
<div class="t" style="left:815px;top:308px;">&lt; 94.0</div>
<div class="t" style="left:895px;top:308px;">&lt; 90.0</div>
<svg style="left:14px;top:327px" width="14" height="7" viewBox="0 0 14 7"><g shape-rendering="crispEdges"><rect x="2" y="6" width="11" height="1" fill="#fff"/><rect x="13" y="2" width="1" height="4" fill="#fff"/><rect x="2" y="0" width="10" height="1" fill="#808080"/><rect x="0" y="2" width="1" height="3" fill="#808080"/><rect x="1" y="1" width="1" height="1" fill="#808080"/><rect x="1" y="5" width="1" height="1" fill="#808080"/><rect x="12" y="1" width="1" height="1" fill="#808080"/><rect x="1" y="2" width="6" height="3" fill="#ff0000"/><rect x="7" y="2" width="6" height="3" fill="#ff0000"/><rect x="2" y="1" width="5" height="1" fill="#ff0000"/><rect x="7" y="1" width="5" height="1" fill="#ff0000"/><rect x="2" y="5" width="5" height="1" fill="#800000"/><rect x="7" y="5" width="5" height="1" fill="#800000"/><rect x="12" y="2" width="1" height="3" fill="#800000"/><rect x="2" y="2" width="2" height="1" fill="#fff"/><rect x="2" y="3" width="1" height="1" fill="#fff"/></g></svg>
<div class="t" style="left:35px;top:325px;letter-spacing:0.107px;font-size:11px;">IP SLA G729.[10.0.3.253-&gt;10.0.3.252]</div>
<div class="t" style="left:232px;top:325px;letter-spacing:-0.1px">MOS</div>
<div class="t" style="left:494px;top:325px;">1.0</div>
<div class="t" style="left:575px;top:325px;">&gt;= 4.07</div>
<div class="t" style="left:655px;top:325px;">&lt; 4.07</div>
<div class="t" style="left:735px;top:325px;">&lt; 3.6</div>
<div class="t" style="left:815px;top:325px;">&lt; 3.1</div>
<svg style="left:894px;top:327px" width="9" height="9" viewBox="0 0 9 9"><path d="M0.700 4.500l2.300 3l5.200-7" stroke="#0000ff" stroke-width="1.700" fill="none"/></svg>
<div class="t" style="left:913px;top:325px;">&lt; 2.6</div>
<svg style="left:14px;top:344px" width="14" height="7" viewBox="0 0 14 7"><g shape-rendering="crispEdges"><rect x="2" y="6" width="11" height="1" fill="#fff"/><rect x="13" y="2" width="1" height="4" fill="#fff"/><rect x="2" y="0" width="10" height="1" fill="#808080"/><rect x="0" y="2" width="1" height="3" fill="#808080"/><rect x="1" y="1" width="1" height="1" fill="#808080"/><rect x="1" y="5" width="1" height="1" fill="#808080"/><rect x="12" y="1" width="1" height="1" fill="#808080"/><rect x="1" y="2" width="6" height="3" fill="#ff0000"/><rect x="7" y="2" width="6" height="3" fill="#ff0000"/><rect x="2" y="1" width="5" height="1" fill="#ff0000"/><rect x="7" y="1" width="5" height="1" fill="#ff0000"/><rect x="2" y="5" width="5" height="1" fill="#800000"/><rect x="7" y="5" width="5" height="1" fill="#800000"/><rect x="12" y="2" width="1" height="3" fill="#800000"/><rect x="2" y="2" width="2" height="1" fill="#fff"/><rect x="2" y="3" width="1" height="1" fill="#fff"/></g></svg>
<div class="t" style="left:35px;top:342px;letter-spacing:0.107px;font-size:11px;">IP SLA G729.[10.0.3.253-&gt;10.0.3.252]</div>
<div class="t" style="left:232px;top:342px;letter-spacing:-0.1px">ICPIF</div>
<div class="t" style="left:494px;top:342px;">107.0</div>
<div class="t" style="left:575px;top:342px;">&lt;= 10.0</div>
<div class="t" style="left:655px;top:342px;">&gt; 10.0</div>
<div class="t" style="left:735px;top:342px;">&gt; 20.0</div>
<div class="t" style="left:815px;top:342px;">&gt; 30.0</div>
<svg style="left:894px;top:344px" width="9" height="9" viewBox="0 0 9 9"><path d="M0.700 4.500l2.300 3l5.200-7" stroke="#0000ff" stroke-width="1.700" fill="none"/></svg>
<div class="t" style="left:913px;top:342px;">&gt; 45.0</div>
<svg style="left:14px;top:361px" width="14" height="7" viewBox="0 0 14 7"><g shape-rendering="crispEdges"><rect x="2" y="6" width="11" height="1" fill="#fff"/><rect x="13" y="2" width="1" height="4" fill="#fff"/><rect x="2" y="0" width="10" height="1" fill="#808080"/><rect x="0" y="2" width="1" height="3" fill="#808080"/><rect x="1" y="1" width="1" height="1" fill="#808080"/><rect x="1" y="5" width="1" height="1" fill="#808080"/><rect x="12" y="1" width="1" height="1" fill="#808080"/><rect x="1" y="2" width="6" height="3" fill="#ff0000"/><rect x="7" y="2" width="6" height="3" fill="#ff0000"/><rect x="2" y="1" width="5" height="1" fill="#ff0000"/><rect x="7" y="1" width="5" height="1" fill="#ff0000"/><rect x="2" y="5" width="5" height="1" fill="#800000"/><rect x="7" y="5" width="5" height="1" fill="#800000"/><rect x="12" y="2" width="1" height="3" fill="#800000"/><rect x="2" y="2" width="2" height="1" fill="#fff"/><rect x="2" y="3" width="1" height="1" fill="#fff"/></g></svg>
<div class="t" style="left:35px;top:359px;letter-spacing:0.107px;font-size:11px;">IP SLA G729.[10.0.3.253-&gt;10.0.3.252]</div>
<div class="t" style="left:232px;top:359px;letter-spacing:-0.1px">Delay (usec)</div>
<div class="t" style="left:494px;top:359px;">3765400.0</div>
<div class="t" style="left:575px;top:359px;">&lt;= 85000.0</div>
<div class="t" style="left:655px;top:359px;">&gt; 85000.0</div>
<div class="t" style="left:735px;top:359px;">&gt; 200000.0</div>
<div class="t" style="left:815px;top:359px;">&gt; 290000.0</div>
<svg style="left:894px;top:361px" width="9" height="9" viewBox="0 0 9 9"><path d="M0.700 4.500l2.300 3l5.200-7" stroke="#0000ff" stroke-width="1.700" fill="none"/></svg>
<div class="t" style="left:913px;top:359px;">&gt; 3700...</div>
<svg style="left:14px;top:378px" width="14" height="7" viewBox="0 0 14 7"><g shape-rendering="crispEdges"><rect x="2" y="6" width="11" height="1" fill="#fff"/><rect x="13" y="2" width="1" height="4" fill="#fff"/><rect x="2" y="0" width="10" height="1" fill="#808080"/><rect x="0" y="2" width="1" height="3" fill="#808080"/><rect x="1" y="1" width="1" height="1" fill="#808080"/><rect x="1" y="5" width="1" height="1" fill="#808080"/><rect x="12" y="1" width="1" height="1" fill="#808080"/><rect x="1" y="2" width="6" height="3" fill="#ff0000"/><rect x="7" y="2" width="6" height="3" fill="#ff0000"/><rect x="2" y="1" width="5" height="1" fill="#ff0000"/><rect x="7" y="1" width="5" height="1" fill="#ff0000"/><rect x="2" y="5" width="5" height="1" fill="#800000"/><rect x="7" y="5" width="5" height="1" fill="#800000"/><rect x="12" y="2" width="1" height="3" fill="#800000"/><rect x="2" y="2" width="2" height="1" fill="#fff"/><rect x="2" y="3" width="1" height="1" fill="#fff"/></g></svg>
<div class="t" style="left:35px;top:376px;letter-spacing:0.107px;font-size:11px;">IP SLA G729.[10.0.3.253-&gt;10.0.3.252]</div>
<div class="t" style="left:232px;top:376px;letter-spacing:-0.1px">Packet Loss (%)</div>
<div class="t" style="left:494px;top:376px;">95.0</div>
<div class="t" style="left:575px;top:376px;">&lt;= 1.0</div>
<div class="t" style="left:655px;top:376px;">&gt; 1.0</div>
<div class="t" style="left:735px;top:376px;">&gt; 2.0</div>
<div class="t" style="left:815px;top:376px;">&gt; 3.0</div>
<svg style="left:894px;top:378px" width="9" height="9" viewBox="0 0 9 9"><path d="M0.700 4.500l2.300 3l5.200-7" stroke="#0000ff" stroke-width="1.700" fill="none"/></svg>
<div class="t" style="left:913px;top:376px;">&gt; 5.0</div>
<svg style="left:14px;top:395px" width="14" height="7" viewBox="0 0 14 7"><g shape-rendering="crispEdges"><rect x="2" y="6" width="11" height="1" fill="#fff"/><rect x="13" y="2" width="1" height="4" fill="#fff"/><rect x="2" y="0" width="10" height="1" fill="#808080"/><rect x="0" y="2" width="1" height="3" fill="#808080"/><rect x="1" y="1" width="1" height="1" fill="#808080"/><rect x="1" y="5" width="1" height="1" fill="#808080"/><rect x="12" y="1" width="1" height="1" fill="#808080"/><rect x="1" y="2" width="6" height="3" fill="#ff0000"/><rect x="7" y="2" width="6" height="3" fill="#ff0000"/><rect x="2" y="1" width="5" height="1" fill="#ff0000"/><rect x="7" y="1" width="5" height="1" fill="#ff0000"/><rect x="2" y="5" width="5" height="1" fill="#800000"/><rect x="7" y="5" width="5" height="1" fill="#800000"/><rect x="12" y="2" width="1" height="3" fill="#800000"/><rect x="2" y="2" width="2" height="1" fill="#fff"/><rect x="2" y="3" width="1" height="1" fill="#fff"/></g></svg>
<div class="t" style="left:35px;top:393px;letter-spacing:0.107px;font-size:11px;">IP SLA G729.[10.0.3.253-&gt;10.0.3.252]</div>
<div class="t" style="left:232px;top:393px;letter-spacing:-0.1px">Jitter (usec)</div>
<div class="t" style="left:494px;top:393px;">481000.0</div>
<div class="t" style="left:575px;top:393px;">&lt;= 50000.0</div>
<div class="t" style="left:655px;top:393px;">&gt; 50000.0</div>
<div class="t" style="left:735px;top:393px;">&gt; 60000.0</div>
<div class="t" style="left:815px;top:393px;">&gt; 80000.0</div>
<svg style="left:894px;top:395px" width="9" height="9" viewBox="0 0 9 9"><path d="M0.700 4.500l2.300 3l5.200-7" stroke="#0000ff" stroke-width="1.700" fill="none"/></svg>
<div class="t" style="left:913px;top:393px;">&gt; 1000...</div>
<svg style="left:14px;top:412px" width="14" height="7" viewBox="0 0 14 7"><g shape-rendering="crispEdges"><rect x="2" y="6" width="11" height="1" fill="#fff"/><rect x="13" y="2" width="1" height="4" fill="#fff"/><rect x="2" y="0" width="10" height="1" fill="#808080"/><rect x="0" y="2" width="1" height="3" fill="#808080"/><rect x="1" y="1" width="1" height="1" fill="#808080"/><rect x="1" y="5" width="1" height="1" fill="#808080"/><rect x="12" y="1" width="1" height="1" fill="#808080"/><rect x="1" y="2" width="6" height="3" fill="#ff0000"/><rect x="7" y="2" width="6" height="3" fill="#ff0000"/><rect x="2" y="1" width="5" height="1" fill="#ff0000"/><rect x="7" y="1" width="5" height="1" fill="#ff0000"/><rect x="2" y="5" width="5" height="1" fill="#800000"/><rect x="7" y="5" width="5" height="1" fill="#800000"/><rect x="12" y="2" width="1" height="3" fill="#800000"/><rect x="2" y="2" width="2" height="1" fill="#fff"/><rect x="2" y="3" width="1" height="1" fill="#fff"/></g></svg>
<div class="t" style="left:35px;top:410px;letter-spacing:0.107px;font-size:11px;">IP SLA G729.[10.0.3.253-&gt;10.0.3.252]</div>
<div class="t" style="left:232px;top:410px;letter-spacing:-0.1px">The Number of Round Trip Operations</div>
<div class="t" style="left:494px;top:410px;">5.0</div>
<div class="t" style="left:575px;top:410px;">&gt;= 95.0</div>
<div class="t" style="left:655px;top:410px;">&lt; 95.0</div>
<div class="t" style="left:735px;top:410px;">&lt; 85.0</div>
<div class="t" style="left:815px;top:410px;">&lt; 70.0</div>
<svg style="left:894px;top:412px" width="9" height="9" viewBox="0 0 9 9"><path d="M0.700 4.500l2.300 3l5.200-7" stroke="#0000ff" stroke-width="1.700" fill="none"/></svg>
<div class="t" style="left:913px;top:410px;">&lt; 50.0</div>
<div style="left:7px;top:439px;width:1266px;height:1px;background:#ffffff"></div>
<div style="left:5px;top:440px;width:1270px;height:1px;background:#ffffff"></div>
<div style="left:6px;top:443px;width:1268px;height:1px;background:#ffffff"></div>
<div style="left:6px;top:443px;width:1px;height:504px;background:#ffffff"></div>
<div style="left:1273px;top:443px;width:1px;height:505px;background:#808080"></div>
<div style="left:1274px;top:443px;width:1px;height:505px;background:#404040"></div>
<div style="left:6px;top:946px;width:1268px;height:1px;background:#808080"></div>
<div style="left:5px;top:947px;width:1270px;height:1px;background:#404040"></div>
<div style="left:8px;top:444px;width:1265px;height:15px;background:linear-gradient(90deg,#808080 0%,#c0c0c0 100%)"></div>
<div class="m" style="left:10px;top:446px;color:#d4d0c8;font-weight:bold;letter-spacing:0.35px">Управление локальной службой SLA-ON</div>
<div class="raised" style="left:1260px;top:446px;width:11px;height:11px;"></div>
<svg style="left:1262px;top:448px" width="6" height="6" viewBox="0 0 6 6"><path d="M0.500 0.500l5 5M5.500 0.500l-5 5" stroke="#000" stroke-width="1.100"/></svg>
<div style="left:7px;top:460px;width:1266px;height:1px;background:#808080"></div>
<div style="left:7px;top:461px;width:1266px;height:1px;background:#ffffff"></div>
<svg style="left:15px;top:468px" width="12" height="13" viewBox="0 0 12 13"><path d="M0 0l12 6.500l-12 6.500z" fill="#808080"/><path d="M0.500 13.500l12-6.500" stroke="#fff" stroke-width="0.800"/></svg>
<div style="left:40px;top:469px;width:9px;height:9px;background:#ff0000"></div>
<svg style="left:62px;top:466px" width="18" height="17" viewBox="0 0 18 17"><rect x="0.500" y="3.500" width="11" height="10" fill="#fff" stroke="#000"/><path d="M2 6.500h2M5 6.500h4M2 8.500h2M5 8.500h3M2 10.500h2M5 10.500h2" stroke="#000" stroke-width="0.900"/>
<path d="M5 5l5-4.500h6.500v5h-3l-3 3h-2z" fill="#fff" stroke="#000" stroke-width="0.900"/><path d="M7 5l3-3M9 5l3-3" stroke="#808080" stroke-width="0.700"/><rect x="16.2" y="0" width="1.800" height="6" fill="#1018a0"/><path d="M11 7.500l1.200 1.300l1.600-.700l.500 1.700l1.700.300l-.500 1.700l1.300 1.200l-1.300 1.200l.500 1.700l-1.700.300l-.500 1.700l-1.600-.700l-1.200 1.300l-1.200-1.300l-1.600.700l-.500-1.700l-1.700-.300l.500-1.700l-1.300-1.200l1.300-1.200l-.500-1.700l1.700-.300l.500-1.700l1.600.700z" fill="#f0e020" stroke="#000" stroke-width="0.700" transform="translate(1.500,-0.500) scale(0.920)"/><circle cx="11.600" cy="12.200" r="1.300" fill="#d4d0c8" stroke="#000" stroke-width="0.700"/></svg>
<div style="left:86px;top:464px;width:1px;height:22px;background:#808080"></div>
<div style="left:87px;top:464px;width:1px;height:22px;background:#ffffff"></div>
<svg style="left:93px;top:466px" width="19" height="17" viewBox="0 0 19 17"><path d="M5 5l5-4.500h6.500v5h-3l-3 3h-2z" fill="#fff" stroke="#000" stroke-width="0.900"/><path d="M7 5l3-3M9 5l3-3" stroke="#808080" stroke-width="0.700"/><rect x="16.2" y="0" width="1.800" height="6" fill="#1018a0"/><text x="0" y="15.500" font-family="Liberation Sans" font-weight="bold" font-size="11.500" fill="#f01010" stroke="#500" stroke-width="0.400">S</text><path d="M9.500 11l2 2.500l4.500-4.500" stroke="#1018a0" stroke-width="1.600" fill="none"/></svg>
<svg style="left:120px;top:466px" width="17" height="17" viewBox="0 0 17 17"><rect x="0.500" y="8.500" width="14" height="7" fill="#fff" stroke="#000" stroke-width="1.200"/><path d="M2.500 12.500h10" stroke="#000" stroke-width="1.200"/><path d="M15.500 9.500v6.500h-14" stroke="#808080" fill="none"/>
<path d="M4 0.500l8.500 8.500M12.500 0.500l-8.500 8.500" stroke="#900000" stroke-width="1.300"/></svg>
<div style="left:144px;top:464px;width:1px;height:22px;background:#808080"></div>
<div style="left:145px;top:464px;width:1px;height:22px;background:#ffffff"></div>
<svg style="left:151px;top:466px" width="19" height="17" viewBox="0 0 19 17"><path d="M5 5l5-4.500h6.500v5h-3l-3 3h-2z" fill="#fff" stroke="#000" stroke-width="0.900"/><path d="M7 5l3-3M9 5l3-3" stroke="#808080" stroke-width="0.700"/><rect x="16.2" y="0" width="1.800" height="6" fill="#1018a0"/><text x="0" y="15.500" font-family="Liberation Sans" font-weight="bold" font-size="15.500" fill="#fcf400" stroke="#000" stroke-width="0.500">e</text><path d="M10 11l2 2.500l4.500-4.500" stroke="#1018a0" stroke-width="1.600" fill="none"/></svg>
<svg style="left:180px;top:469px" width="11" height="11" viewBox="0 0 11 11"><rect x="0" y="0" width="2.500" height="11" fill="#808080"/><path d="M10 0v11l-6.500-5.500z" fill="#808080"/><path d="M10.700 0.500v11" stroke="#fff" stroke-width="0.700"/></svg>
<svg style="left:207px;top:469px" width="7" height="11" viewBox="0 0 7 11"><path d="M6.500 0v11l-6.500-5.500z" fill="#808080"/></svg>
<svg style="left:234px;top:469px" width="7" height="11" viewBox="0 0 7 11"><path d="M0 0v11l6.500-5.500z" fill="#808080"/><path d="M0.500 11.500l6.500-5.500" stroke="#fff" stroke-width="0.700"/></svg>
<svg style="left:256px;top:469px" width="11" height="11" viewBox="0 0 11 11"><rect x="8" y="0" width="2.500" height="11" fill="#808080"/><path d="M0.500 0v11l6.500-5.500z" fill="#808080"/><path d="M11 0.500v11" stroke="#fff" stroke-width="0.700"/></svg>
<svg style="left:278px;top:467px" width="16" height="14" viewBox="0 0 16 14"><rect x="0" y="0" width="16" height="1.300" fill="#000"/><rect x="0.500" y="2.500" width="15" height="9" fill="#fff" stroke="#000"/><path d="M1 5.500h14M1 8.500h14M5.500 3v8M10.500 3v8" stroke="#505050" stroke-width="0.600"/><rect x="0" y="12.500" width="16" height="1.500" fill="#000"/></svg>
<svg style="left:303px;top:473px" width="5" height="3" viewBox="0 0 5 3"><path d="M0 0h5l-2.500 3z" fill="#000"/></svg>
<div style="left:315px;top:464px;width:1px;height:22px;background:#808080"></div>
<div style="left:316px;top:464px;width:1px;height:22px;background:#ffffff"></div>
<svg style="left:323px;top:466px" width="18" height="16" viewBox="0 0 18 16"><path d="M5 5l5-5l7 3v6l-5 4l-3-2v3l-3 2h-6l2-3h2v-6z" fill="#808080"/><path d="M9 8l2 2l4-4" stroke="#d4d0c8" stroke-width="1.300" fill="none"/><path d="M6 4l4-3l5 2" stroke="#d4d0c8" fill="none" stroke-width="0.800"/></svg>
<svg style="left:351px;top:466px" width="14" height="16" viewBox="0 0 14 16"><path d="M2 2q4-3 8 0l1-1v5h-4l1.500-1.500q-2.500-2-5 0zM1 8h6l5 5l-4 4l-6-4z" fill="#808080"/><path d="M12.500 13.500l-4 4" stroke="#fff" stroke-width="0.800"/></svg>
<svg style="left:376px;top:467px" width="12" height="14" viewBox="0 0 12 14"><path d="M0 2l3 1l3 1l3-3l2-1v4l-0.500 6l-2 3h-5l-2-3z" fill="#808080"/><rect x="4.500" y="6" width="2" height="2.500" fill="#d4d0c8"/><path d="M11.500 4v7l-2 3" stroke="#fff" stroke-width="0.700" fill="none"/></svg>
<div style="left:8px;top:490px;width:1264px;height:1px;background:#808080"></div>
<div style="left:9px;top:491px;width:1262px;height:1px;background:#404040"></div>
<div style="left:8px;top:490px;width:1px;height:436px;background:#808080"></div>
<div style="left:9px;top:491px;width:1px;height:434px;background:#404040"></div>
<div style="left:1271px;top:491px;width:1px;height:435px;background:#d4d0c8"></div>
<div style="left:1272px;top:490px;width:1px;height:437px;background:#ffffff"></div>
<div style="left:8px;top:926px;width:1265px;height:1px;background:#ffffff"></div>
<div style="left:9px;top:925px;width:1263px;height:1px;background:#d4d0c8"></div>
<div style="left:10px;top:513px;width:1260px;height:1px;background:#ffffff"></div>
<div style="left:10px;top:513px;width:1px;height:411px;background:#ffffff"></div>
<div style="left:1269px;top:514px;width:1px;height:410px;background:#808080"></div>
<div style="left:1270px;top:513px;width:1px;height:412px;background:#404040"></div>
<div style="left:11px;top:923px;width:1259px;height:1px;background:#808080"></div>
<div style="left:10px;top:924px;width:1261px;height:1px;background:#404040"></div>
<div style="left:12px;top:494px;width:71px;height:19px;border-left:1px solid #fff;border-top:1px solid #fff;border-radius:3px 3px 0 0"></div>
<svg style="left:18px;top:496px" width="16" height="17" viewBox="0 0 16 17"><path d="M6.8 4.6L6.9 1.9L9.1 1.9L9.2 4.6L10.3 5.0L12.2 3.2L13.8 4.8L12.0 6.7L12.4 7.8L15.1 7.9L15.1 10.1L12.4 10.2L12.0 11.3L13.8 13.2L12.2 14.8L10.3 13.0L9.2 13.4L9.1 16.1L6.9 16.1L6.8 13.4L5.7 13.0L3.8 14.8L2.2 13.2L4.0 11.3L3.6 10.2L0.9 10.1L0.9 7.9L3.6 7.8L4.0 6.7L2.2 4.8L3.8 3.2L5.7 5.0z" fill="#90b8f0" transform="translate(0.500,1)" opacity="0.800"/><path d="M6.8 4.6L6.9 1.9L9.1 1.9L9.2 4.6L10.3 5.0L12.2 3.2L13.8 4.8L12.0 6.7L12.4 7.8L15.1 7.9L15.1 10.1L12.4 10.2L12.0 11.3L13.8 13.2L12.2 14.8L10.3 13.0L9.2 13.4L9.1 16.1L6.9 16.1L6.8 13.4L5.7 13.0L3.8 14.8L2.2 13.2L4.0 11.3L3.6 10.2L0.9 10.1L0.9 7.9L3.6 7.8L4.0 6.7L2.2 4.8L3.8 3.2L5.7 5.0z" fill="#f4b030" stroke="#c88018" stroke-width="0.500"/>
<path d="M1.500 11.500l2 3.500l3 1.500h3l3-1.500l2-3.500l-1.500-.500l-2 3l-3 1l-3-1l-2-3z" fill="#c83018" opacity="0.850"/>
<circle cx="8" cy="9" r="2.300" fill="#f8d070"/><rect x="6.500" y="0.500" width="3" height="8" fill="#282828"/><rect x="7.200" y="1.500" width="0.800" height="5" fill="#b8b8b8"/></svg>
<div class="t" style="left:40.7px;top:499px;letter-spacing:-0.389px;font-size:11px;">Служба</div>
<div style="left:159px;top:494px;width:82px;height:19px;border-top:1px solid #fff;border-right:1px solid #404040;border-radius:0 3px 0 0"></div>
<div style="left:239px;top:496px;width:1px;height:17px;background:#808080"></div>
<svg style="left:163px;top:496px" width="15" height="16" viewBox="0 0 15 16"><path d="M1.500 3.500h4l1 1.500h7v10h-12z" fill="#f0d070" stroke="#a08020" stroke-width="0.800"/><path d="M3.500 0.500h8v9h-8z" fill="#fff" stroke="#8098c0" stroke-width="0.800"/><rect x="5" y="2" width="4" height="3" fill="#80b0e8"/>
<path d="M4 9.500h5v-3l6 5l-6 5v-3h-5z" fill="#40b830" stroke="#207010" stroke-width="0.800"/></svg>
<div class="t" style="left:186px;top:499px;letter-spacing:0.22px;font-size:11px;">Доставка</div>
<div style="left:83px;top:492px;width:76px;height:22px;background:#d4d0c8;border-left:1px solid #fff;border-top:1px solid #fff;border-right:1px solid #404040;border-radius:3px 3px 0 0"></div>
<div style="left:157px;top:494px;width:1px;height:19px;background:#808080"></div>
<svg style="left:90px;top:497px" width="14" height="11" viewBox="0 0 14 11"><rect x="0.500" y="0.500" width="13" height="10" fill="#f8f4d0" stroke="#606060"/><rect x="1" y="1" width="12" height="2" fill="#2858c8"/>
<rect x="2" y="4" width="2" height="2" fill="#30a030"/><rect x="6" y="4" width="2" height="2" fill="#e03030"/><rect x="10" y="4" width="2" height="2" fill="#3050e0"/><rect x="2" y="7" width="2" height="2" fill="#e0a020"/><rect x="6" y="7" width="2" height="2" fill="#30a030"/><rect x="10" y="7" width="2" height="2" fill="#e03030"/></svg>
<div class="t" style="left:112px;top:497px;letter-spacing:-0.026px;font-size:11px;">Сеансы</div>
<div style="left:12px;top:515px;width:1256px;height:41px;background:#fff;border:1px solid;border-color:#808080 #fff #fff #808080"></div>
<div style="left:13px;top:516px;width:1254px;height:39px;border:1px solid;border-color:#404040 #d4d0c8 #d4d0c8 #404040"></div>
<div style="left:14px;top:517px;width:1236px;height:16px;background:#d4d0c8"></div>
<div style="left:14px;top:517px;width:64px;height:16px;border:1px solid;border-color:#fff #404040 #404040 #fff;background:#d4d0c8;"></div>
<div style="left:76px;top:518px;width:1px;height:14px;background:#808080"></div>
<div style="left:15px;top:531px;width:62px;height:1px;background:#808080"></div>
<div class="t" style="left:19px;top:519.5px;">ID сеанса</div>
<div style="left:78px;top:517px;width:75px;height:16px;border:1px solid;border-color:#fff #404040 #404040 #fff;background:#d4d0c8;"></div>
<div style="left:151px;top:518px;width:1px;height:14px;background:#808080"></div>
<div style="left:79px;top:531px;width:73px;height:1px;background:#808080"></div>
<div class="t" style="left:83px;top:519.5px;">ID файла ...</div>
<div style="left:153px;top:517px;width:70px;height:16px;border:1px solid;border-color:#fff #404040 #404040 #fff;background:#d4d0c8;"></div>
<div style="left:221px;top:518px;width:1px;height:14px;background:#808080"></div>
<div style="left:154px;top:531px;width:68px;height:1px;background:#808080"></div>
<div class="t" style="left:158px;top:519.5px;">Состояние</div>
<div style="left:223px;top:517px;width:105px;height:16px;border:1px solid;border-color:#fff #404040 #404040 #fff;background:#d4d0c8;"></div>
<div style="left:326px;top:518px;width:1px;height:14px;background:#808080"></div>
<div style="left:224px;top:531px;width:103px;height:1px;background:#808080"></div>
<div class="t" style="left:228px;top:519.5px;">Провайдер</div>
<div style="left:328px;top:517px;width:312px;height:16px;border:1px solid;border-color:#fff #404040 #404040 #fff;background:#d4d0c8;"></div>
<div style="left:638px;top:518px;width:1px;height:14px;background:#808080"></div>
<div style="left:329px;top:531px;width:310px;height:1px;background:#808080"></div>
<div class="t" style="left:333px;top:519.5px;">Приложение</div>
<div style="left:640px;top:517px;width:65px;height:16px;border:1px solid;border-color:#fff #404040 #404040 #fff;background:#d4d0c8;"></div>
<div style="left:703px;top:518px;width:1px;height:14px;background:#808080"></div>
<div style="left:641px;top:531px;width:63px;height:1px;background:#808080"></div>
<div class="t" style="left:645px;top:519.5px;">Версия</div>
<div style="left:705px;top:517px;width:60px;height:16px;border:1px solid;border-color:#fff #404040 #404040 #fff;background:#d4d0c8;"></div>
<div style="left:763px;top:518px;width:1px;height:14px;background:#808080"></div>
<div style="left:706px;top:531px;width:58px;height:1px;background:#808080"></div>
<div class="t" style="left:710px;top:519.5px;">Время ...</div>
<div style="left:765px;top:517px;width:60px;height:16px;border:1px solid;border-color:#fff #404040 #404040 #fff;background:#d4d0c8;"></div>
<div style="left:823px;top:518px;width:1px;height:14px;background:#808080"></div>
<div style="left:766px;top:531px;width:58px;height:1px;background:#808080"></div>
<div class="t" style="left:770px;top:519.5px;">Интер...</div>
<div style="left:825px;top:517px;width:60px;height:16px;border:1px solid;border-color:#fff #404040 #404040 #fff;background:#d4d0c8;"></div>
<div style="left:883px;top:518px;width:1px;height:14px;background:#808080"></div>
<div style="left:826px;top:531px;width:58px;height:1px;background:#808080"></div>
<div class="t" style="left:830px;top:519.5px;">Простой</div>
<div style="left:885px;top:517px;width:180px;height:16px;border:1px solid;border-color:#fff #404040 #404040 #fff;background:#d4d0c8;"></div>
<div style="left:1063px;top:518px;width:1px;height:14px;background:#808080"></div>
<div style="left:886px;top:531px;width:178px;height:1px;background:#808080"></div>
<div class="t" style="left:890px;top:519.5px;">Папка файлов "сырых" данных</div>
<div style="left:1065px;top:517px;width:75px;height:16px;border:1px solid;border-color:#fff #404040 #404040 #fff;background:#d4d0c8;"></div>
<div style="left:1138px;top:518px;width:1px;height:14px;background:#808080"></div>
<div style="left:1066px;top:531px;width:73px;height:1px;background:#808080"></div>
<div class="t" style="left:1070px;top:519.5px;">Профайлов</div>
<div style="left:1140px;top:517px;width:114px;height:16px;border:1px solid;border-color:#fff #404040 #404040 #fff;background:#d4d0c8;"></div>
<div style="left:1252px;top:518px;width:1px;height:14px;background:#808080"></div>
<div style="left:1141px;top:531px;width:112px;height:1px;background:#808080"></div>
<div style="left:77px;top:533px;width:1px;height:21px;background:#d4d0c8"></div>
<div style="left:152px;top:533px;width:1px;height:21px;background:#d4d0c8"></div>
<div style="left:222px;top:533px;width:1px;height:21px;background:#d4d0c8"></div>
<div style="left:327px;top:533px;width:1px;height:21px;background:#d4d0c8"></div>
<div style="left:639px;top:533px;width:1px;height:21px;background:#d4d0c8"></div>
<div style="left:704px;top:533px;width:1px;height:21px;background:#d4d0c8"></div>
<div style="left:764px;top:533px;width:1px;height:21px;background:#d4d0c8"></div>
<div style="left:824px;top:533px;width:1px;height:21px;background:#d4d0c8"></div>
<div style="left:884px;top:533px;width:1px;height:21px;background:#d4d0c8"></div>
<div style="left:1064px;top:533px;width:1px;height:21px;background:#d4d0c8"></div>
<div style="left:1139px;top:533px;width:1px;height:21px;background:#d4d0c8"></div>
<div style="left:14px;top:547px;width:1236px;height:1px;background:#d4d0c8"></div>
<div style="left:18px;top:534px;width:1122px;height:13px;background:#d4d0c8"></div>
<div class="t" style="left:19px;top:535px;">000505E0</div>
<div class="t" style="left:83px;top:535px;">-</div>
<div class="t" style="left:158px;top:535px;">Работа</div>
<div class="t" style="left:228px;top:535px;">ProLAN</div>
<div class="t" style="left:333px;top:535px;">SLA-ON PROBE IP SLA G729</div>
<div class="t" style="left:645px;top:535px;">1.0</div>
<div class="t" style="left:710px;top:535px;">03:07:33</div>
<div class="t" style="left:770px;top:535px;">187</div>
<div class="t" style="left:830px;top:535px;">100.00%</div>
<div class="t" style="left:890px;top:535px;"></div>
<div class="t" style="left:1070px;top:535px;">1</div>
<div style="left:14px;top:549px;width:1236px;height:5px;overflow:hidden"><div class="t" style="left:5px;top:0px">000505DE</div><div class="t" style="left:69px;top:0px">-</div><div class="t" style="left:144px;top:0px">Работа</div><div class="t" style="left:214px;top:0px">ProLAN</div><div class="t" style="left:319px;top:0px">SLA-ON PROBE IPSLA INTERACTIVE</div><div class="t" style="left:631px;top:0px">1.0</div><div class="t" style="left:696px;top:0px">03:07:36</div><div class="t" style="left:756px;top:0px">187</div><div class="t" style="left:816px;top:0px">100.00%</div><div class="t" style="left:876px;top:0px"></div><div class="t" style="left:1056px;top:0px">1</div></div>
<div style="left:1250px;top:517px;width:16px;height:37px;background-color:#d4d0c8;background-image:linear-gradient(45deg,#fff 25%,transparent 25%,transparent 75%,#fff 75%),linear-gradient(45deg,#fff 25%,transparent 25%,transparent 75%,#fff 75%);background-size:2px 2px;background-position:0 0,1px 1px;"></div>
<div class="raised" style="left:1250px;top:517px;width:16px;height:16px;"></div>
<svg style="left:1254px;top:523px" width="7" height="4" viewBox="0 0 7 4"><path d="M0 4h7l-3.500-3.500z" fill="#000"/></svg>
<div class="raised" style="left:1250px;top:538px;width:16px;height:16px;"></div>
<svg style="left:1254px;top:544px" width="7" height="4" viewBox="0 0 7 4"><path d="M0 0h7l-3.500 3.500z" fill="#000"/></svg>
<div style="left:12px;top:561px;width:1256px;height:362px;background:#fff;border:1px solid;border-color:#808080 #fff #fff #808080"></div>
<div style="left:13px;top:562px;width:1254px;height:360px;border:1px solid;border-color:#404040 #d4d0c8 #d4d0c8 #404040"></div>
<div style="left:14px;top:563px;width:1252px;height:16px;background:#d4d0c8"></div>
<div style="left:14px;top:563px;width:20px;height:16px;border:1px solid;border-color:#fff #404040 #404040 #fff;background:#d4d0c8;"></div>
<div style="left:32px;top:564px;width:1px;height:14px;background:#808080"></div>
<div style="left:15px;top:577px;width:18px;height:1px;background:#808080"></div>
<div style="left:34px;top:563px;width:474px;height:16px;border:1px solid;border-color:#fff #404040 #404040 #fff;background:#d4d0c8;"></div>
<div style="left:506px;top:564px;width:1px;height:14px;background:#808080"></div>
<div style="left:35px;top:577px;width:472px;height:1px;background:#808080"></div>
<div class="t" style="left:39px;top:565px;">Имя</div>
<div style="left:508px;top:563px;width:80px;height:16px;border:1px solid;border-color:#fff #404040 #404040 #fff;background:#d4d0c8;"></div>
<div style="left:586px;top:564px;width:1px;height:14px;background:#808080"></div>
<div style="left:509px;top:577px;width:78px;height:1px;background:#808080"></div>
<div class="t" style="left:513px;top:565px;">Число соб...</div>
<div style="left:588px;top:563px;width:80px;height:16px;border:1px solid;border-color:#fff #404040 #404040 #fff;background:#d4d0c8;"></div>
<div style="left:666px;top:564px;width:1px;height:14px;background:#808080"></div>
<div style="left:589px;top:577px;width:78px;height:1px;background:#808080"></div>
<div class="t" style="left:593px;top:565px;">Превышений</div>
<div style="left:668px;top:563px;width:120px;height:16px;border:1px solid;border-color:#fff #404040 #404040 #fff;background:#d4d0c8;"></div>
<div style="left:786px;top:564px;width:1px;height:14px;background:#808080"></div>
<div style="left:669px;top:577px;width:118px;height:1px;background:#808080"></div>
<div class="t" style="left:673px;top:565px;">Среднее значение</div>
<div style="left:788px;top:563px;width:120px;height:16px;border:1px solid;border-color:#fff #404040 #404040 #fff;background:#d4d0c8;"></div>
<div style="left:906px;top:564px;width:1px;height:14px;background:#808080"></div>
<div style="left:789px;top:577px;width:118px;height:1px;background:#808080"></div>
<div class="t" style="left:793px;top:565px;">Минимальное знач...</div>
<div style="left:908px;top:563px;width:120px;height:16px;border:1px solid;border-color:#fff #404040 #404040 #fff;background:#d4d0c8;"></div>
<div style="left:1026px;top:564px;width:1px;height:14px;background:#808080"></div>
<div style="left:909px;top:577px;width:118px;height:1px;background:#808080"></div>
<div class="t" style="left:913px;top:565px;">Максимальное зна...</div>
<div style="left:1028px;top:563px;width:242px;height:16px;border:1px solid;border-color:#fff #404040 #404040 #fff;background:#d4d0c8;"></div>
<div style="left:1268px;top:564px;width:1px;height:14px;background:#808080"></div>
<div style="left:1029px;top:577px;width:240px;height:1px;background:#808080"></div>
<div style="left:1266px;top:563px;width:1px;height:16px;background:#d4d0c8"></div>
<div style="left:1267px;top:562px;width:1px;height:17px;background:#ffffff"></div>
<div style="left:1268px;top:562px;width:2px;height:18px;background:#d4d0c8"></div>
<div style="left:14px;top:766px;width:1014px;height:17px;background:#d4d0c8"></div>
<div style="left:14px;top:595px;width:1252px;height:1px;background:#d4d0c8"></div>
<div style="left:14px;top:612px;width:1252px;height:1px;background:#d4d0c8"></div>
<div style="left:14px;top:629px;width:1252px;height:1px;background:#d4d0c8"></div>
<div style="left:14px;top:646px;width:1252px;height:1px;background:#d4d0c8"></div>
<div style="left:14px;top:663px;width:1252px;height:1px;background:#d4d0c8"></div>
<div style="left:14px;top:680px;width:1252px;height:1px;background:#d4d0c8"></div>
<div style="left:14px;top:697px;width:1252px;height:1px;background:#d4d0c8"></div>
<div style="left:14px;top:714px;width:1252px;height:1px;background:#d4d0c8"></div>
<div style="left:14px;top:731px;width:1252px;height:1px;background:#d4d0c8"></div>
<div style="left:14px;top:748px;width:1252px;height:1px;background:#d4d0c8"></div>
<div style="left:14px;top:765px;width:1252px;height:1px;background:#d4d0c8"></div>
<div style="left:14px;top:782px;width:1252px;height:1px;background:#d4d0c8"></div>
<div style="left:14px;top:799px;width:1252px;height:1px;background:#d4d0c8"></div>
<div style="left:14px;top:816px;width:1252px;height:1px;background:#d4d0c8"></div>
<div style="left:14px;top:833px;width:1252px;height:1px;background:#d4d0c8"></div>
<div style="left:14px;top:850px;width:1252px;height:1px;background:#d4d0c8"></div>
<div style="left:14px;top:867px;width:1252px;height:1px;background:#d4d0c8"></div>
<div style="left:14px;top:884px;width:1252px;height:1px;background:#d4d0c8"></div>
<div style="left:14px;top:901px;width:1252px;height:1px;background:#d4d0c8"></div>
<div style="left:14px;top:918px;width:1252px;height:1px;background:#d4d0c8"></div>
<div style="left:34px;top:579px;width:1px;height:343px;background:#d4d0c8"></div>
<div style="left:507px;top:579px;width:1px;height:343px;background:#d4d0c8"></div>
<div style="left:587px;top:579px;width:1px;height:343px;background:#d4d0c8"></div>
<div style="left:667px;top:579px;width:1px;height:343px;background:#d4d0c8"></div>
<div style="left:787px;top:579px;width:1px;height:343px;background:#d4d0c8"></div>
<div style="left:907px;top:579px;width:1px;height:343px;background:#d4d0c8"></div>
<div style="left:1027px;top:579px;width:1px;height:343px;background:#d4d0c8"></div>
<div class="t" style="left:40px;top:582px;letter-spacing:0.107px;font-size:11px;">IP SLA G729.[10.0.3.253-&gt;10.0.3.252]</div>
<div class="t" style="left:236px;top:582px;letter-spacing:-0.1px">Delay (usec)</div>
<div class="t" style="left:513px;top:582px;">0</div>
<div class="t" style="left:793px;top:582px;">0.000</div>
<div class="t" style="left:913px;top:582px;">0.000</div>
<div class="t" style="left:40px;top:599px;letter-spacing:0.107px;font-size:11px;">IP SLA G729.[10.0.3.253-&gt;10.0.3.252]</div>
<div class="t" style="left:236px;top:599px;letter-spacing:-0.1px">ICPIF</div>
<div class="t" style="left:513px;top:599px;">1</div>
<div class="t" style="left:673px;top:599px;">80.000</div>
<div class="t" style="left:793px;top:599px;">80.000</div>
<div class="t" style="left:913px;top:599px;">80.000</div>
<div class="t" style="left:40px;top:616px;letter-spacing:0.107px;font-size:11px;">IP SLA G729.[10.0.3.253-&gt;10.0.3.252]</div>
<div class="t" style="left:236px;top:616px;letter-spacing:-0.1px">Jitter (usec)</div>
<div class="t" style="left:513px;top:616px;">1</div>
<div class="t" style="left:673px;top:616px;">85000.000</div>
<div class="t" style="left:793px;top:616px;">85000.000</div>
<div class="t" style="left:913px;top:616px;">85000.000</div>
<div class="t" style="left:40px;top:633px;letter-spacing:0.107px;font-size:11px;">IP SLA G729.[10.0.3.253-&gt;10.0.3.252]</div>
<div class="t" style="left:236px;top:633px;letter-spacing:-0.1px">JitterNegativDS (usec)</div>
<div class="t" style="left:513px;top:633px;">1</div>
<div class="t" style="left:673px;top:633px;">28000.000</div>
<div class="t" style="left:793px;top:633px;">28000.000</div>
<div class="t" style="left:913px;top:633px;">28000.000</div>
<div class="t" style="left:40px;top:650px;letter-spacing:0.107px;font-size:11px;">IP SLA G729.[10.0.3.253-&gt;10.0.3.252]</div>
<div class="t" style="left:236px;top:650px;letter-spacing:-0.1px">JitterNegativSD (usec)</div>
<div class="t" style="left:513px;top:650px;">1</div>
<div class="t" style="left:673px;top:650px;">15111.111</div>
<div class="t" style="left:793px;top:650px;">15111.111</div>
<div class="t" style="left:913px;top:650px;">15111.111</div>
<div class="t" style="left:40px;top:667px;letter-spacing:0.107px;font-size:11px;">IP SLA G729.[10.0.3.253-&gt;10.0.3.252]</div>
<div class="t" style="left:236px;top:667px;letter-spacing:-0.1px">JitterPositivDS (usec)</div>
<div class="t" style="left:513px;top:667px;">1</div>
<div class="t" style="left:673px;top:667px;">32000.000</div>
<div class="t" style="left:793px;top:667px;">32000.000</div>
<div class="t" style="left:913px;top:667px;">32000.000</div>
<div class="t" style="left:40px;top:684px;letter-spacing:0.107px;font-size:11px;">IP SLA G729.[10.0.3.253-&gt;10.0.3.252]</div>
<div class="t" style="left:236px;top:684px;letter-spacing:-0.1px">JitterPositiveSD (usec)</div>
<div class="t" style="left:513px;top:684px;">1</div>
<div class="t" style="left:673px;top:684px;">85000.000</div>
<div class="t" style="left:793px;top:684px;">85000.000</div>
<div class="t" style="left:913px;top:684px;">85000.000</div>
<div class="t" style="left:40px;top:701px;letter-spacing:0.107px;font-size:11px;">IP SLA G729.[10.0.3.253-&gt;10.0.3.252]</div>
<div class="t" style="left:236px;top:701px;letter-spacing:-0.1px">MOS</div>
<div class="t" style="left:513px;top:701px;">1</div>
<div class="t" style="left:673px;top:701px;">1.410</div>
<div class="t" style="left:793px;top:701px;">1.410</div>
<div class="t" style="left:913px;top:701px;">1.410</div>
<div class="t" style="left:40px;top:718px;letter-spacing:0.107px;font-size:11px;">IP SLA G729.[10.0.3.253-&gt;10.0.3.252]</div>
<div class="t" style="left:236px;top:718px;letter-spacing:-0.1px">NumOfOW</div>
<div class="t" style="left:513px;top:718px;">1</div>
<div class="t" style="left:673px;top:718px;">13.000</div>
<div class="t" style="left:793px;top:718px;">13.000</div>
<div class="t" style="left:913px;top:718px;">13.000</div>
<div class="t" style="left:40px;top:735px;letter-spacing:0.107px;font-size:11px;">IP SLA G729.[10.0.3.253-&gt;10.0.3.252]</div>
<div class="t" style="left:236px;top:735px;letter-spacing:-0.1px">OWlatencyDS (usec)</div>
<div class="t" style="left:513px;top:735px;">1</div>
<div class="t" style="left:673px;top:735px;">2873615.385</div>
<div class="t" style="left:793px;top:735px;">2873615.385</div>
<div class="t" style="left:913px;top:735px;">2873615.385</div>
<div class="t" style="left:40px;top:752px;letter-spacing:0.107px;font-size:11px;">IP SLA G729.[10.0.3.253-&gt;10.0.3.252]</div>
<div class="t" style="left:236px;top:752px;letter-spacing:-0.1px">OWlatencySD (usec)</div>
<div class="t" style="left:513px;top:752px;">1</div>
<div class="t" style="left:673px;top:752px;">3606153.846</div>
<div class="t" style="left:793px;top:752px;">3606153.846</div>
<div class="t" style="left:913px;top:752px;">3606153.846</div>
<div class="t" style="left:40px;top:769px;letter-spacing:0.107px;font-size:11px;">IP SLA G729.[10.0.3.253-&gt;10.0.3.252]</div>
<div class="t" style="left:236px;top:769px;letter-spacing:-0.1px">Packet Loss (%)</div>
<div class="t" style="left:513px;top:769px;">1</div>
<div class="t" style="left:673px;top:769px;">87.000</div>
<div class="t" style="left:793px;top:769px;">87.000</div>
<div class="t" style="left:913px;top:769px;">87.000</div>
<div class="t" style="left:40px;top:786px;letter-spacing:0.107px;font-size:11px;">IP SLA G729.[10.0.3.253-&gt;10.0.3.252]</div>
<div class="t" style="left:236px;top:786px;letter-spacing:-0.1px">PacketLateArrival</div>
<div class="t" style="left:513px;top:786px;">1</div>
<div class="t" style="left:673px;top:786px;">13.000</div>
<div class="t" style="left:793px;top:786px;">13.000</div>
<div class="t" style="left:913px;top:786px;">13.000</div>
<div class="t" style="left:40px;top:803px;letter-spacing:0.107px;font-size:11px;">IP SLA G729.[10.0.3.253-&gt;10.0.3.252]</div>
<div class="t" style="left:236px;top:803px;letter-spacing:-0.1px">PacketLossDS</div>
<div class="t" style="left:513px;top:803px;">1</div>
<div class="t" style="left:673px;top:803px;">0.000</div>
<div class="t" style="left:793px;top:803px;">0.000</div>
<div class="t" style="left:913px;top:803px;">0.000</div>
<div class="t" style="left:40px;top:820px;letter-spacing:0.107px;font-size:11px;">IP SLA G729.[10.0.3.253-&gt;10.0.3.252]</div>
<div class="t" style="left:236px;top:820px;letter-spacing:-0.1px">PacketLossSD</div>
<div class="t" style="left:513px;top:820px;">1</div>
<div class="t" style="left:673px;top:820px;">0.000</div>
<div class="t" style="left:793px;top:820px;">0.000</div>
<div class="t" style="left:913px;top:820px;">0.000</div>
<div class="t" style="left:40px;top:837px;letter-spacing:0.107px;font-size:11px;">IP SLA G729.[10.0.3.253-&gt;10.0.3.252]</div>
<div class="t" style="left:236px;top:837px;letter-spacing:-0.1px">PacketMIA</div>
<div class="t" style="left:513px;top:837px;">1</div>
<div class="t" style="left:673px;top:837px;">87.000</div>
<div class="t" style="left:793px;top:837px;">87.000</div>
<div class="t" style="left:913px;top:837px;">87.000</div>
<div class="t" style="left:40px;top:854px;letter-spacing:0.107px;font-size:11px;">IP SLA G729.[10.0.3.253-&gt;10.0.3.252]</div>
<div class="t" style="left:236px;top:854px;letter-spacing:-0.1px">PacketOutOfSequence</div>
<div class="t" style="left:513px;top:854px;">1</div>
<div class="t" style="left:673px;top:854px;">0.000</div>
<div class="t" style="left:793px;top:854px;">0.000</div>
<div class="t" style="left:913px;top:854px;">0.000</div>
<div class="t" style="left:40px;top:871px;letter-spacing:0.107px;font-size:11px;">IP SLA G729.[10.0.3.253-&gt;10.0.3.252]</div>
<div class="t" style="left:236px;top:871px;letter-spacing:-0.1px">SNMP Device Availability (%)</div>
<div class="t" style="left:513px;top:871px;">1</div>
<div class="t" style="left:673px;top:871px;">100.000</div>
<div class="t" style="left:793px;top:871px;">100.000</div>
<div class="t" style="left:913px;top:871px;">100.000</div>
<div class="t" style="left:40px;top:888px;letter-spacing:0.107px;font-size:11px;">IP SLA G729.[10.0.3.253-&gt;10.0.3.252]</div>
<div class="t" style="left:236px;top:888px;letter-spacing:-0.1px">The Number of Round Trip Operations</div>
<div class="t" style="left:513px;top:888px;">1</div>
<div class="t" style="left:673px;top:888px;">13.000</div>
<div class="t" style="left:793px;top:888px;">13.000</div>
<div class="t" style="left:913px;top:888px;">13.000</div>
<svg style="left:19px;top:907px" width="14" height="7" viewBox="0 0 14 7"><g shape-rendering="crispEdges"><rect x="2" y="6" width="11" height="1" fill="#fff"/><rect x="13" y="2" width="1" height="4" fill="#fff"/><rect x="2" y="0" width="10" height="1" fill="#808080"/><rect x="0" y="2" width="1" height="3" fill="#808080"/><rect x="1" y="1" width="1" height="1" fill="#808080"/><rect x="1" y="5" width="1" height="1" fill="#808080"/><rect x="12" y="1" width="1" height="1" fill="#808080"/><rect x="1" y="2" width="6" height="3" fill="#ff0000"/><rect x="7" y="2" width="6" height="3" fill="#ff0000"/><rect x="2" y="1" width="5" height="1" fill="#ff0000"/><rect x="7" y="1" width="5" height="1" fill="#ff0000"/><rect x="2" y="5" width="5" height="1" fill="#800000"/><rect x="7" y="5" width="5" height="1" fill="#800000"/><rect x="12" y="2" width="1" height="3" fill="#800000"/><rect x="2" y="2" width="2" height="1" fill="#fff"/><rect x="2" y="3" width="1" height="1" fill="#fff"/></g></svg>
<div class="t" style="left:40px;top:905px;letter-spacing:-0.211px;font-size:11px;">IP SLA G729.Professional Cisco IP SLA Based Test for G.729</div>
<div class="t" style="left:513px;top:905px;">1</div>
<div style="left:8px;top:927px;width:514px;height:18px;border:1px solid;border-color:#808080 #fff #fff #808080"></div>
<div style="left:523px;top:927px;width:99px;height:18px;border:1px solid;border-color:#808080 #fff #fff #808080"></div>
<div class="t" style="left:526px;top:930px;letter-spacing:-0.107px;font-size:11px;">Сеансов: 3</div>
<div style="left:623px;top:927px;width:499px;height:18px;border:1px solid;border-color:#808080 #fff #fff #808080"></div>
<div class="t" style="left:626px;top:930px;letter-spacing:-0.04px;font-size:11px;">Список метрик  -  Сортировка: по имени.  Страница 1 из 1</div>
<div style="left:1123px;top:927px;width:99px;height:18px;border:1px solid;border-color:#808080 #fff #fff #808080"></div>
<div class="t" style="left:1126px;top:930px;letter-spacing:-0.01px;font-size:11px;">Заданий: 186</div>
<div style="left:1223px;top:927px;width:49px;height:18px;border:1px solid;border-color:#808080 #fff #fff #808080"></div>
<svg style="left:16px;top:950px" width="15" height="15" viewBox="0 0 15 15"><circle cx="10" cy="5" r="4.300" fill="#dce8fc" stroke="#a0b0d8" stroke-width="1.200"/><path d="M6.500 8.500l-5.500 5.500" stroke="#e89038" stroke-width="2"/><path d="M5.500 9.500l-4 4" stroke="#c04040" stroke-width="0.700"/></svg>
<div class="t" style="left:38px;top:953px;">Поиск</div>
<div style="left:80px;top:949px;width:1px;height:21px;background:#808080"></div>
<div style="left:81px;top:949px;width:1px;height:21px;background:#ffffff"></div>
<div style="left:86px;top:949px;width:131px;height:21px;border:1px solid;border-color:#808080 #fff #fff #808080;background-color:#d4d0c8;background-image:linear-gradient(45deg,#fff 25%,transparent 25%,transparent 75%,#fff 75%),linear-gradient(45deg,#fff 25%,transparent 25%,transparent 75%,#fff 75%);background-size:2px 2px;background-position:0 0,1px 1px;"></div>
<svg style="left:93px;top:951px" width="16" height="17" viewBox="0 0 16 17"><path d="M6.8 4.6L6.9 1.9L9.1 1.9L9.2 4.6L10.3 5.0L12.2 3.2L13.8 4.8L12.0 6.7L12.4 7.8L15.1 7.9L15.1 10.1L12.4 10.2L12.0 11.3L13.8 13.2L12.2 14.8L10.3 13.0L9.2 13.4L9.1 16.1L6.9 16.1L6.8 13.4L5.7 13.0L3.8 14.8L2.2 13.2L4.0 11.3L3.6 10.2L0.9 10.1L0.9 7.9L3.6 7.8L4.0 6.7L2.2 4.8L3.8 3.2L5.7 5.0z" fill="#90b8f0" transform="translate(0.500,1)" opacity="0.800"/><path d="M6.8 4.6L6.9 1.9L9.1 1.9L9.2 4.6L10.3 5.0L12.2 3.2L13.8 4.8L12.0 6.7L12.4 7.8L15.1 7.9L15.1 10.1L12.4 10.2L12.0 11.3L13.8 13.2L12.2 14.8L10.3 13.0L9.2 13.4L9.1 16.1L6.9 16.1L6.8 13.4L5.7 13.0L3.8 14.8L2.2 13.2L4.0 11.3L3.6 10.2L0.9 10.1L0.9 7.9L3.6 7.8L4.0 6.7L2.2 4.8L3.8 3.2L5.7 5.0z" fill="#f4b030" stroke="#c88018" stroke-width="0.500"/>
<path d="M1.500 11.500l2 3.500l3 1.500h3l3-1.500l2-3.500l-1.500-.500l-2 3l-3 1l-3-1l-2-3z" fill="#c83018" opacity="0.850"/>
<circle cx="8" cy="9" r="2.300" fill="#f8d070"/><rect x="6.500" y="0.500" width="3" height="8" fill="#282828"/><rect x="7.200" y="1.500" width="0.800" height="5" fill="#b8b8b8"/></svg>
<div class="t" style="left:116px;top:954px;">Локальная служба</div>
<div style="left:220px;top:949px;width:1px;height:21px;background:#808080"></div>
<div style="left:221px;top:949px;width:1px;height:21px;background:#ffffff"></div>
<svg style="left:232px;top:950px" width="16" height="16" viewBox="0 0 16 16"><path d="M7.500 1q-3.500 0-4 6l-2 5.500h12l-2-5.500q-0.500-6-4-6z" fill="#f0e040" stroke="#000" stroke-width="1"/><path d="M6 2.500q-1.500 2-1.500 9.500M9 2.500q1 2 1 9.500" stroke="#fffff0" fill="none" stroke-width="1.200"/>
<path d="M0.500 12.500h14" stroke="#000" stroke-width="1.500"/><circle cx="7.500" cy="14.500" r="1.300" fill="#000"/><rect x="6.500" y="0" width="2" height="1.500" fill="#000"/></svg>
<div class="t" style="left:254px;top:953px;">SNMP ловушки</div>
<div style="left:341px;top:949px;width:1px;height:21px;background:#808080"></div>
<div style="left:342px;top:949px;width:1px;height:21px;background:#ffffff"></div>
<svg style="left:352px;top:951px" width="17" height="14" viewBox="0 0 17 14"><circle cx="5" cy="4.500" r="3" fill="#f0a060"/><path d="M2 4q0-3.500 3-3.500t3 3.500q-3-1.500-6 0z" fill="#402818"/><path d="M0.500 13.500q0-5.500 4.500-5.500t4.500 5.500z" fill="#2868d8" stroke="#103078" stroke-width="0.600"/>
<circle cx="12" cy="4.500" r="3" fill="#f8c890"/><path d="M9 4q0-3.500 3-3.500t3 3.500q-3-1.500-6 0z" fill="#f09020"/><path d="M7.500 13.500q0-5.500 4.500-5.500t4.500 5.500z" fill="#40a840" stroke="#186018" stroke-width="0.600"/></svg>
<div class="t" style="left:375px;top:953px;">Активность пользователей</div>
<div style="left:524px;top:949px;width:1px;height:21px;background:#808080"></div>
<div style="left:525px;top:949px;width:1px;height:21px;background:#ffffff"></div>
<div style="left:5px;top:972px;width:1170px;height:18px;border:1px solid;border-color:#808080 #fff #fff #808080"></div>
<div style="left:1177px;top:972px;width:47px;height:18px;border:1px solid;border-color:#808080 #fff #fff #808080"></div>
<div style="left:1227px;top:972px;width:48px;height:18px;border:1px solid;border-color:#808080 #fff #fff #808080"></div>
<div class="t" style="left:7px;top:975px;">Готово</div>
<svg style="left:1261px;top:977px" width="12" height="12" viewBox="0 0 12 12"><path d="M11.500 0.500l-11 11M11.500 4.500l-7 7M11.500 8.500l-3 3" stroke="#808080" stroke-width="1.400"/><path d="M10.500 0.500l-10 10M10.500 4.500l-6 6M10.500 8.500l-2 2" stroke="#fff" stroke-width="0.900"/></svg>
</div></body></html>
